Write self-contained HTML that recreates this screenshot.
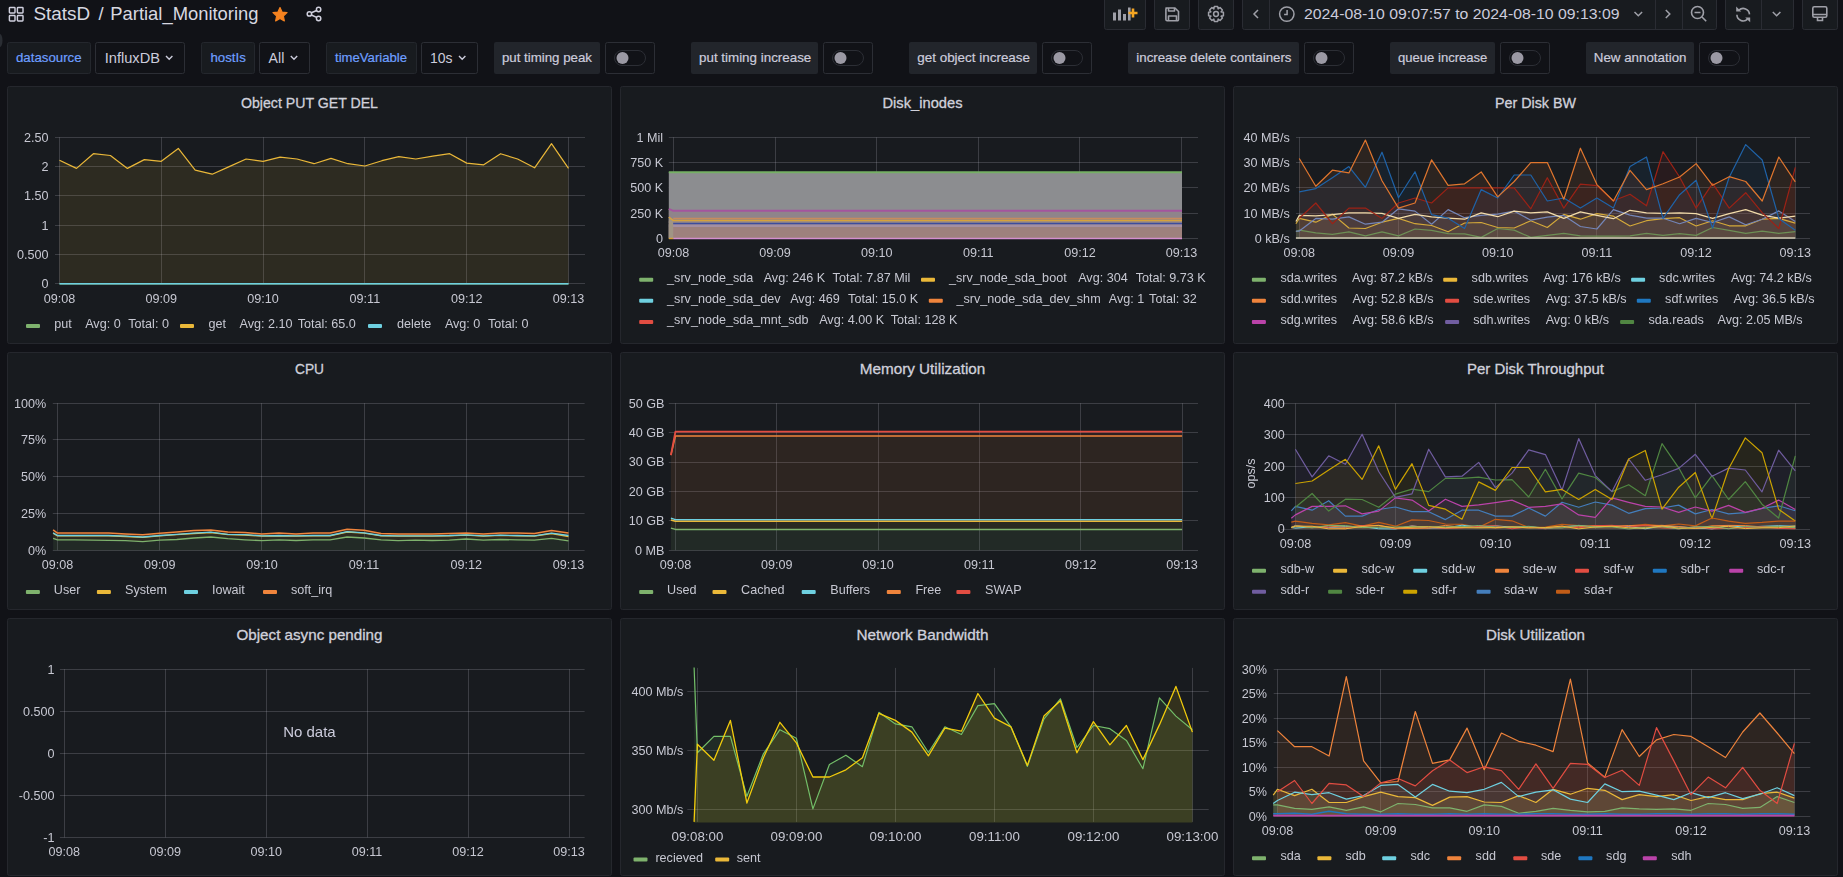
<!DOCTYPE html>
<html><head><meta charset="utf-8"><style>
html,body{margin:0;padding:0;background:#111217;width:1843px;height:877px;overflow:hidden}
svg{display:block;font-family:"Liberation Sans",sans-serif;position:absolute;left:0;top:0}
#l2{will-change:transform}
</style></head><body>
<svg width="1843" height="877" viewBox="0 0 1843 877">
<rect x="9.4" y="7.4" width="5.6" height="5.6" fill="none" stroke="#d0d0de" stroke-width="1.45" rx="0.7"/>
<rect x="17.4" y="7.4" width="5.6" height="5.6" fill="none" stroke="#d0d0de" stroke-width="1.45" rx="0.7"/>
<rect x="9.4" y="15.4" width="5.6" height="5.6" fill="none" stroke="#d0d0de" stroke-width="1.45" rx="0.7"/>
<rect x="17.4" y="15.4" width="5.6" height="5.6" fill="none" stroke="#d0d0de" stroke-width="1.45" rx="0.7"/>
<text x="33.5" y="20.0" font-size="18.9" fill="#d8d9e1">StatsD</text>
<text x="98.5" y="20.0" font-size="18.4" fill="#d8d9e1">/</text>
<text x="110.3" y="20.0" font-size="18.4" fill="#d8d9e1">Partial_Monitoring</text>
<polygon points="280.00,7.50 282.06,12.07 287.04,12.61 283.33,15.98 284.35,20.89 280.00,18.40 275.65,20.89 276.67,15.98 272.96,12.61 277.94,12.07" fill="#F5821F" stroke="#F5821F" stroke-width="1.2" stroke-linejoin="round"/>
<g fill="none" stroke="#d0d0de" stroke-width="1.5"><circle cx="318.6" cy="9.5" r="2.2"/><circle cx="318.6" cy="18.5" r="2.2"/><circle cx="309.4" cy="13.9" r="2.2"/><path d="M311.4 12.8 L316.6 10.5 M311.4 15 L316.6 17.4"/></g>
<rect x="1104.5" y="-2.5" width="41" height="32" fill="#181b1f" stroke="#2a2c33" stroke-width="1" rx="2"/>
<rect x="1154.5" y="-2.5" width="35" height="32" fill="#181b1f" stroke="#2a2c33" stroke-width="1" rx="2"/>
<rect x="1198.5" y="-2.5" width="35" height="32" fill="#181b1f" stroke="#2a2c33" stroke-width="1" rx="2"/>
<rect x="1242.5" y="-2.5" width="474" height="32" fill="#181b1f" stroke="#2a2c33" stroke-width="1" rx="2"/>
<rect x="1725.5" y="-2.5" width="68" height="32" fill="#181b1f" stroke="#2a2c33" stroke-width="1" rx="2"/>
<rect x="1802.5" y="-2.5" width="35" height="32" fill="#181b1f" stroke="#2a2c33" stroke-width="1" rx="2"/>
<line x1="1269.5" y1="-3" x2="1269.5" y2="29" stroke="#2a2c33"/>
<line x1="1655.5" y1="-3" x2="1655.5" y2="29" stroke="#2a2c33"/>
<line x1="1682.5" y1="-3" x2="1682.5" y2="29" stroke="#2a2c33"/>
<line x1="1761.5" y1="-3" x2="1761.5" y2="29" stroke="#2a2c33"/>
<g fill="#9fa0a8"><rect x="1113" y="12.5" width="3" height="8"/><rect x="1118" y="9.5" width="3" height="11"/><rect x="1123" y="14" width="3" height="6.5"/><rect x="1128" y="7.5" width="2.6" height="13"/></g>
<path d="M1133 8.5 v9 M1128.5 13 h9" stroke="#F5A623" stroke-width="2.6"/>
<g fill="none" stroke="#9fa0a8" stroke-width="1.6" stroke-linejoin="round"><path d="M1166 8 h9 l3.5 3.5 v8 a1.2 1.2 0 0 1 -1.2 1.2 h-10.2 a1.2 1.2 0 0 1 -1.2 -1.2 v-10.3 a1.2 1.2 0 0 1 1.1 -1.2z"/><path d="M1168.5 8 v3 h6 v-3"/><path d="M1168.5 20.5 v-4.5 h8 v4.5"/></g>
<polygon points="1223.42,12.34 1223.42,15.66 1221.11,16.28 1221.23,16.00 1222.42,18.07 1220.07,20.42 1218.00,19.23 1218.28,19.11 1217.66,21.42 1214.34,21.42 1213.72,19.11 1214.00,19.23 1211.93,20.42 1209.58,18.07 1210.77,16.00 1210.89,16.28 1208.58,15.66 1208.58,12.34 1210.89,11.72 1210.77,12.00 1209.58,9.93 1211.93,7.58 1214.00,8.77 1213.72,8.89 1214.34,6.58 1217.66,6.58 1218.28,8.89 1218.00,8.77 1220.07,7.58 1222.42,9.93 1221.23,12.00 1221.11,11.72" fill="none" stroke="#9fa0a8" stroke-width="1.5" stroke-linejoin="round"/><circle cx="1216" cy="14" r="2.4" fill="none" stroke="#9fa0a8" stroke-width="1.5"/>
<path d="M1258 10 L1254 14 L1258 18" fill="none" stroke="#9fa0a8" stroke-width="1.5"/>
<path d="M1665.8 10 L1669.8 14 L1665.8 18" fill="none" stroke="#9fa0a8" stroke-width="1.5"/>
<path d="M1634.5 12 L1638.3 15.8 L1642.1 12" fill="none" stroke="#9fa0a8" stroke-width="1.5"/>
<path d="M1772.8 12 L1776.6 15.8 L1780.4 12" fill="none" stroke="#9fa0a8" stroke-width="1.5"/>
<g fill="none" stroke="#9fa0a8" stroke-width="1.5"><circle cx="1286.8" cy="14.1" r="7.2"/><path d="M1287.1 10 v4.4 h-3"/></g>
<text x="1304.0" y="19.3" font-size="15" fill="#ccccdc" textLength="315.5" lengthAdjust="spacingAndGlyphs">2024-08-10 09:07:57 to 2024-08-10 09:13:09</text>
<g fill="none" stroke="#9fa0a8" stroke-width="1.6"><circle cx="1697.5" cy="12.5" r="6"/><path d="M1694.5 12.5 h6 M1702 17 l4.2 4.2"/></g>
<g fill="none" stroke="#9fa0a8" stroke-width="1.6"><path d="M1738.9 10.2 A6.3 6.3 0 0 1 1749.5 14.4"/><path d="M1736.9 14.8 A6.3 6.3 0 0 0 1747.6 19.1"/></g>
<g fill="#9fa0a8"><path d="M1736.2 6.6 L1736.2 11.6 L1741.2 11.6 Z"/><path d="M1745.2 17.4 L1750.2 17.4 L1750.2 22.2 Z"/></g>
<g fill="none" stroke="#9fa0a8" stroke-width="1.6"><rect x="1812.8" y="6.8" width="14" height="10.5" rx="1.5"/><path d="M1813 14.5 h14 M1817.5 17.5 v3 h5 v-3"/></g>
<path d="M0 34 a2.5 6.5 0 0 1 0 13z" fill="#2a2d33"/>
<rect x="7.5" y="42.5" width="83" height="31" fill="#181b1f" stroke="#24272d" stroke-width="1" rx="2"/>
<text x="16.0" y="62.0" font-size="13.3" fill="#6E9FFF" textLength="65.6" lengthAdjust="spacingAndGlyphs" stroke="#6E9FFF" stroke-width="0.2">datasource</text>
<rect x="95.5" y="42.5" width="89" height="31" fill="#111217" stroke="#2c2e35" stroke-width="1" rx="2"/>
<text x="104.7" y="63.0" font-size="15" fill="#ccccdc" textLength="55.3" lengthAdjust="spacingAndGlyphs">InfluxDB</text>
<path d="M166 56 L169.2 59.2 L172.4 56" fill="none" stroke="#ccccdc" stroke-width="1.4"/>
<rect x="201.5" y="42.5" width="53" height="31" fill="#181b1f" stroke="#24272d" stroke-width="1" rx="2"/>
<text x="210.5" y="62.0" font-size="13.3" fill="#6E9FFF" textLength="35.3" lengthAdjust="spacingAndGlyphs" stroke="#6E9FFF" stroke-width="0.2">hostIs</text>
<rect x="259.5" y="42.5" width="50" height="31" fill="#111217" stroke="#2c2e35" stroke-width="1" rx="2"/>
<text x="268.6" y="63.0" font-size="15" fill="#ccccdc" textLength="15.7" lengthAdjust="spacingAndGlyphs">All</text>
<path d="M290.8 56 L294.0 59.2 L297.2 56" fill="none" stroke="#ccccdc" stroke-width="1.4"/>
<rect x="326.5" y="42.5" width="90" height="31" fill="#181b1f" stroke="#24272d" stroke-width="1" rx="2"/>
<text x="335.0" y="62.0" font-size="13.3" fill="#6E9FFF" textLength="72" lengthAdjust="spacingAndGlyphs" stroke="#6E9FFF" stroke-width="0.2">timeVariable</text>
<rect x="421.5" y="42.5" width="56" height="31" fill="#111217" stroke="#2c2e35" stroke-width="1" rx="2"/>
<text x="430.0" y="63.0" font-size="15" fill="#ccccdc" textLength="22.5" lengthAdjust="spacingAndGlyphs">10s</text>
<path d="M459 56 L462.2 59.2 L465.4 56" fill="none" stroke="#ccccdc" stroke-width="1.4"/>
<rect x="494" y="42.0" width="106" height="32" fill="#22252b" rx="2"/>
<text x="501.9" y="62.0" font-size="13.3" fill="#ccccdc" textLength="90.1" lengthAdjust="spacingAndGlyphs" stroke="#ccccdc" stroke-width="0.2">put timing peak</text>
<rect x="605.5" y="42.5" width="49" height="31" fill="#111217" stroke="#2c2e35" stroke-width="1" rx="2"/>
<rect x="614.5" y="50.5" width="31" height="15" fill="#111217" stroke="#2c2e35" stroke-width="1" rx="7.5"/>
<circle cx="622.5" cy="58" r="6" fill="#9b99a4"/>
<rect x="691" y="42.0" width="127" height="32" fill="#22252b" rx="2"/>
<text x="699.0" y="62.0" font-size="13.3" fill="#ccccdc" textLength="112.3" lengthAdjust="spacingAndGlyphs" stroke="#ccccdc" stroke-width="0.2">put timing increase</text>
<rect x="823.5" y="42.5" width="49" height="31" fill="#111217" stroke="#2c2e35" stroke-width="1" rx="2"/>
<rect x="832.5" y="50.5" width="31" height="15" fill="#111217" stroke="#2c2e35" stroke-width="1" rx="7.5"/>
<circle cx="840.5" cy="58" r="6" fill="#9b99a4"/>
<rect x="909" y="42.0" width="128" height="32" fill="#22252b" rx="2"/>
<text x="917.3" y="62.0" font-size="13.3" fill="#ccccdc" textLength="112.7" lengthAdjust="spacingAndGlyphs" stroke="#ccccdc" stroke-width="0.2">get object increase</text>
<rect x="1042.5" y="42.5" width="49" height="31" fill="#111217" stroke="#2c2e35" stroke-width="1" rx="2"/>
<rect x="1051.5" y="50.5" width="31" height="15" fill="#111217" stroke="#2c2e35" stroke-width="1" rx="7.5"/>
<circle cx="1059.5" cy="58" r="6" fill="#9b99a4"/>
<rect x="1128" y="42.0" width="171" height="32" fill="#22252b" rx="2"/>
<text x="1136.3" y="62.0" font-size="13.3" fill="#ccccdc" textLength="155.2" lengthAdjust="spacingAndGlyphs" stroke="#ccccdc" stroke-width="0.2">increase delete containers</text>
<rect x="1304.5" y="42.5" width="49" height="31" fill="#111217" stroke="#2c2e35" stroke-width="1" rx="2"/>
<rect x="1313.5" y="50.5" width="31" height="15" fill="#111217" stroke="#2c2e35" stroke-width="1" rx="7.5"/>
<circle cx="1321.5" cy="58" r="6" fill="#9b99a4"/>
<rect x="1390" y="42.0" width="105" height="32" fill="#22252b" rx="2"/>
<text x="1398.0" y="62.0" font-size="13.3" fill="#ccccdc" textLength="89.4" lengthAdjust="spacingAndGlyphs" stroke="#ccccdc" stroke-width="0.2">queue increase</text>
<rect x="1500.5" y="42.5" width="49" height="31" fill="#111217" stroke="#2c2e35" stroke-width="1" rx="2"/>
<rect x="1509.5" y="50.5" width="31" height="15" fill="#111217" stroke="#2c2e35" stroke-width="1" rx="7.5"/>
<circle cx="1517.5" cy="58" r="6" fill="#9b99a4"/>
<rect x="1586" y="42.0" width="108" height="32" fill="#22252b" rx="2"/>
<text x="1593.8" y="62.0" font-size="13.3" fill="#ccccdc" textLength="92.7" lengthAdjust="spacingAndGlyphs" stroke="#ccccdc" stroke-width="0.2">New annotation</text>
<rect x="1699.5" y="42.5" width="49" height="31" fill="#111217" stroke="#2c2e35" stroke-width="1" rx="2"/>
<rect x="1708.5" y="50.5" width="31" height="15" fill="#111217" stroke="#2c2e35" stroke-width="1" rx="7.5"/>
<circle cx="1716.5" cy="58" r="6" fill="#9b99a4"/>
<rect x="7.5" y="86.5" width="604" height="257" fill="#181b1f" stroke="#25272d" stroke-width="1" rx="2"/>
<text x="309.5" y="108.0" font-size="14.6" fill="#d0d1db" text-anchor="middle" textLength="137" lengthAdjust="spacingAndGlyphs" stroke="#d0d1db" stroke-width="0.3">Object PUT GET DEL</text>
<rect x="620.5" y="86.5" width="604" height="257" fill="#181b1f" stroke="#25272d" stroke-width="1" rx="2"/>
<text x="922.5" y="108.0" font-size="14.6" fill="#d0d1db" text-anchor="middle" textLength="80" lengthAdjust="spacingAndGlyphs" stroke="#d0d1db" stroke-width="0.3">Disk_inodes</text>
<rect x="1233.5" y="86.5" width="604" height="257" fill="#181b1f" stroke="#25272d" stroke-width="1" rx="2"/>
<text x="1535.5" y="108.0" font-size="14.6" fill="#d0d1db" text-anchor="middle" textLength="81" lengthAdjust="spacingAndGlyphs" stroke="#d0d1db" stroke-width="0.3">Per Disk BW</text>
<rect x="7.5" y="352.5" width="604" height="257" fill="#181b1f" stroke="#25272d" stroke-width="1" rx="2"/>
<text x="309.5" y="374.0" font-size="14.6" fill="#d0d1db" text-anchor="middle" textLength="29" lengthAdjust="spacingAndGlyphs" stroke="#d0d1db" stroke-width="0.3">CPU</text>
<rect x="620.5" y="352.5" width="604" height="257" fill="#181b1f" stroke="#25272d" stroke-width="1" rx="2"/>
<text x="922.5" y="374.0" font-size="14.6" fill="#d0d1db" text-anchor="middle" textLength="125.5" lengthAdjust="spacingAndGlyphs" stroke="#d0d1db" stroke-width="0.3">Memory Utilization</text>
<rect x="1233.5" y="352.5" width="604" height="257" fill="#181b1f" stroke="#25272d" stroke-width="1" rx="2"/>
<text x="1535.5" y="374.0" font-size="14.6" fill="#d0d1db" text-anchor="middle" textLength="137" lengthAdjust="spacingAndGlyphs" stroke="#d0d1db" stroke-width="0.3">Per Disk Throughput</text>
<rect x="7.5" y="618.5" width="604" height="257" fill="#181b1f" stroke="#25272d" stroke-width="1" rx="2"/>
<text x="309.5" y="640.0" font-size="14.6" fill="#d0d1db" text-anchor="middle" textLength="146" lengthAdjust="spacingAndGlyphs" stroke="#d0d1db" stroke-width="0.3">Object async pending</text>
<rect x="620.5" y="618.5" width="604" height="257" fill="#181b1f" stroke="#25272d" stroke-width="1" rx="2"/>
<text x="922.5" y="640.0" font-size="14.6" fill="#d0d1db" text-anchor="middle" textLength="132" lengthAdjust="spacingAndGlyphs" stroke="#d0d1db" stroke-width="0.3">Network Bandwidth</text>
<rect x="1233.5" y="618.5" width="604" height="257" fill="#181b1f" stroke="#25272d" stroke-width="1" rx="2"/>
<text x="1535.5" y="640.0" font-size="14.6" fill="#d0d1db" text-anchor="middle" textLength="99" lengthAdjust="spacingAndGlyphs" stroke="#d0d1db" stroke-width="0.3">Disk Utilization</text>
</svg>
<svg id="l2" width="1843" height="877" viewBox="0 0 1843 877">
<line x1="55" y1="137.5" x2="585" y2="137.5" stroke="rgba(204,204,220,0.2)" stroke-width="1"/>
<line x1="55" y1="166.5" x2="585" y2="166.5" stroke="rgba(204,204,220,0.2)" stroke-width="1"/>
<line x1="55" y1="195.5" x2="585" y2="195.5" stroke="rgba(204,204,220,0.2)" stroke-width="1"/>
<line x1="55" y1="225.5" x2="585" y2="225.5" stroke="rgba(204,204,220,0.2)" stroke-width="1"/>
<line x1="55" y1="254.5" x2="585" y2="254.5" stroke="rgba(204,204,220,0.2)" stroke-width="1"/>
<line x1="55" y1="283.5" x2="585" y2="283.5" stroke="rgba(204,204,220,0.2)" stroke-width="1"/>
<line x1="59.5" y1="137.3" x2="59.5" y2="283.8" stroke="rgba(204,204,220,0.2)" stroke-width="1"/>
<line x1="161.5" y1="137.3" x2="161.5" y2="283.8" stroke="rgba(204,204,220,0.2)" stroke-width="1"/>
<line x1="263.5" y1="137.3" x2="263.5" y2="283.8" stroke="rgba(204,204,220,0.2)" stroke-width="1"/>
<line x1="364.5" y1="137.3" x2="364.5" y2="283.8" stroke="rgba(204,204,220,0.2)" stroke-width="1"/>
<line x1="466.5" y1="137.3" x2="466.5" y2="283.8" stroke="rgba(204,204,220,0.2)" stroke-width="1"/>
<line x1="568.5" y1="137.3" x2="568.5" y2="283.8" stroke="rgba(204,204,220,0.2)" stroke-width="1"/>
<polygon points="59.5,283.8 59.5,160.2 76.5,168.4 93.4,153.7 110.4,155.5 127.4,168.4 144.3,159.6 161.3,161.3 178.3,148.4 195.2,170.1 212.2,174.2 229.2,166.6 246.1,159.0 263.1,161.3 280.1,157.2 297.0,159.0 314.0,163.7 331.0,158.4 347.9,163.7 364.9,166.0 381.9,160.7 398.8,156.6 415.8,159.0 432.8,156.1 449.7,153.7 466.7,163.1 483.7,164.8 500.6,153.7 517.6,159.0 534.6,167.8 551.5,143.7 568.5,168.4 568.5,283.8" fill="#EAB839" fill-opacity="0.1"/>
<polyline points="59.5,160.2 76.5,168.4 93.4,153.7 110.4,155.5 127.4,168.4 144.3,159.6 161.3,161.3 178.3,148.4 195.2,170.1 212.2,174.2 229.2,166.6 246.1,159.0 263.1,161.3 280.1,157.2 297.0,159.0 314.0,163.7 331.0,158.4 347.9,163.7 364.9,166.0 381.9,160.7 398.8,156.6 415.8,159.0 432.8,156.1 449.7,153.7 466.7,163.1 483.7,164.8 500.6,153.7 517.6,159.0 534.6,167.8 551.5,143.7 568.5,168.4" fill="none" stroke="#EAB839" stroke-width="1.2" stroke-linejoin="round"/>
<polyline points="59.5,283.8 76.5,283.8 93.4,283.8 110.4,283.8 127.4,283.8 144.3,283.8 161.3,283.8 178.3,283.8 195.2,283.8 212.2,283.8 229.2,283.8 246.1,283.8 263.1,283.8 280.1,283.8 297.0,283.8 314.0,283.8 331.0,283.8 347.9,283.8 364.9,283.8 381.9,283.8 398.8,283.8 415.8,283.8 432.8,283.8 449.7,283.8 466.7,283.8 483.7,283.8 500.6,283.8 517.6,283.8 534.6,283.8 551.5,283.8 568.5,283.8" fill="none" stroke="#7EB26D" stroke-width="1.2" stroke-linejoin="round"/>
<polyline points="59.5,283.8 76.5,283.8 93.4,283.8 110.4,283.8 127.4,283.8 144.3,283.8 161.3,283.8 178.3,283.8 195.2,283.8 212.2,283.8 229.2,283.8 246.1,283.8 263.1,283.8 280.1,283.8 297.0,283.8 314.0,283.8 331.0,283.8 347.9,283.8 364.9,283.8 381.9,283.8 398.8,283.8 415.8,283.8 432.8,283.8 449.7,283.8 466.7,283.8 483.7,283.8 500.6,283.8 517.6,283.8 534.6,283.8 551.5,283.8 568.5,283.8" fill="none" stroke="#6ED0E0" stroke-width="1.5" stroke-linejoin="round"/>
<text x="48.6" y="141.7" font-size="12.6" fill="#c7c8d2" text-anchor="end">2.50</text>
<text x="48.6" y="171.0" font-size="12.6" fill="#c7c8d2" text-anchor="end">2</text>
<text x="48.6" y="200.3" font-size="12.6" fill="#c7c8d2" text-anchor="end">1.50</text>
<text x="48.6" y="229.6" font-size="12.6" fill="#c7c8d2" text-anchor="end">1</text>
<text x="48.6" y="258.9" font-size="12.6" fill="#c7c8d2" text-anchor="end">0.500</text>
<text x="48.6" y="288.2" font-size="12.6" fill="#c7c8d2" text-anchor="end">0</text>
<text x="59.5" y="302.6" font-size="12.6" fill="#c7c8d2" text-anchor="middle">09:08</text>
<text x="161.3" y="302.6" font-size="12.6" fill="#c7c8d2" text-anchor="middle">09:09</text>
<text x="263.1" y="302.6" font-size="12.6" fill="#c7c8d2" text-anchor="middle">09:10</text>
<text x="364.9" y="302.6" font-size="12.6" fill="#c7c8d2" text-anchor="middle">09:11</text>
<text x="466.7" y="302.6" font-size="12.6" fill="#c7c8d2" text-anchor="middle">09:12</text>
<text x="568.5" y="302.6" font-size="12.6" fill="#c7c8d2" text-anchor="middle">09:13</text>
<rect x="26" y="324.0" width="14" height="4" fill="#7EB26D" rx="1"/>
<text x="54.3" y="328.0" font-size="12.6" fill="#c7c8d2">put</text>
<text x="85.2" y="328.0" font-size="12.6" fill="#c7c8d2">Avg: 0</text>
<text x="128.3" y="328.0" font-size="12.6" fill="#c7c8d2">Total: 0</text>
<rect x="180" y="324.0" width="14" height="4" fill="#EAB839" rx="1"/>
<text x="208.6" y="328.0" font-size="12.6" fill="#c7c8d2">get</text>
<text x="239.5" y="328.0" font-size="12.6" fill="#c7c8d2">Avg: 2.10</text>
<text x="297.7" y="328.0" font-size="12.6" fill="#c7c8d2">Total: 65.0</text>
<rect x="368" y="324.0" width="14" height="4" fill="#6ED0E0" rx="1"/>
<text x="396.9" y="328.0" font-size="12.6" fill="#c7c8d2">delete</text>
<text x="444.9" y="328.0" font-size="12.6" fill="#c7c8d2">Avg: 0</text>
<text x="488.0" y="328.0" font-size="12.6" fill="#c7c8d2">Total: 0</text>
<line x1="668.8" y1="137.5" x2="1198" y2="137.5" stroke="rgba(204,204,220,0.2)" stroke-width="1"/>
<line x1="668.8" y1="162.5" x2="1198" y2="162.5" stroke="rgba(204,204,220,0.2)" stroke-width="1"/>
<line x1="668.8" y1="187.5" x2="1198" y2="187.5" stroke="rgba(204,204,220,0.2)" stroke-width="1"/>
<line x1="668.8" y1="213.5" x2="1198" y2="213.5" stroke="rgba(204,204,220,0.2)" stroke-width="1"/>
<line x1="668.8" y1="238.5" x2="1198" y2="238.5" stroke="rgba(204,204,220,0.2)" stroke-width="1"/>
<line x1="673.5" y1="137.3" x2="673.5" y2="238.4" stroke="rgba(204,204,220,0.2)" stroke-width="1"/>
<line x1="775.5" y1="137.3" x2="775.5" y2="238.4" stroke="rgba(204,204,220,0.2)" stroke-width="1"/>
<line x1="876.5" y1="137.3" x2="876.5" y2="238.4" stroke="rgba(204,204,220,0.2)" stroke-width="1"/>
<line x1="978.5" y1="137.3" x2="978.5" y2="238.4" stroke="rgba(204,204,220,0.2)" stroke-width="1"/>
<line x1="1079.5" y1="137.3" x2="1079.5" y2="238.4" stroke="rgba(204,204,220,0.2)" stroke-width="1"/>
<line x1="1181.5" y1="137.3" x2="1181.5" y2="238.4" stroke="rgba(204,204,220,0.2)" stroke-width="1"/>
<rect x="668.8" y="172" width="513.2" height="66.4" fill="#8c8d90"/>
<polygon points="668.8,208.8 673.2,210.8 1182,210.8 1182,238.4 668.8,238.4" fill="#8f848b"/>
<rect x="668.8" y="221.2" width="513.2" height="1.8000000000000114" fill="#9a8b89"/>
<rect x="668.8" y="224.3" width="513.2" height="2.6999999999999886" fill="#a48fa3"/>
<rect x="668.8" y="227" width="513.2" height="11" fill="#9e817d"/>
<polygon points="668.8,217 673.2,220.4 673.2,238.4 668.8,238.4" fill="#a09585"/>
<line x1="668.8" y1="172.2" x2="1182" y2="172.2" stroke="#76b066" stroke-width="2"/>
<polyline points="668.8,208.8 673.2,210.8 1182,210.8" fill="none" stroke="#a4559e" stroke-width="2"/>
<line x1="673.2" y1="218.5" x2="1182" y2="218.5" stroke="#c88b5e" stroke-width="1.5"/>
<polyline points="668.8,217 673.2,220.4 1182,220.4" fill="none" stroke="#d6a23c" stroke-width="1.5"/>
<line x1="673.2" y1="223.6" x2="1182" y2="223.6" stroke="#3d4c9c" stroke-width="1.5"/>
<line x1="673.2" y1="238.5" x2="1182" y2="238.5" stroke="#d48fcf" stroke-width="1.5"/>
<line x1="668.8" y1="238.5" x2="673.2" y2="238.5" stroke="#d6a23c" stroke-width="1.5"/>
<text x="663.1" y="141.7" font-size="12.6" fill="#c7c8d2" text-anchor="end">1 Mil</text>
<text x="663.1" y="166.9" font-size="12.6" fill="#c7c8d2" text-anchor="end">750 K</text>
<text x="663.1" y="192.2" font-size="12.6" fill="#c7c8d2" text-anchor="end">500 K</text>
<text x="663.1" y="217.5" font-size="12.6" fill="#c7c8d2" text-anchor="end">250 K</text>
<text x="663.1" y="242.8" font-size="12.6" fill="#c7c8d2" text-anchor="end">0</text>
<text x="673.5" y="256.7" font-size="12.6" fill="#c7c8d2" text-anchor="middle">09:08</text>
<text x="775.1" y="256.7" font-size="12.6" fill="#c7c8d2" text-anchor="middle">09:09</text>
<text x="876.7" y="256.7" font-size="12.6" fill="#c7c8d2" text-anchor="middle">09:10</text>
<text x="978.3" y="256.7" font-size="12.6" fill="#c7c8d2" text-anchor="middle">09:11</text>
<text x="1079.9" y="256.7" font-size="12.6" fill="#c7c8d2" text-anchor="middle">09:12</text>
<text x="1181.5" y="256.7" font-size="12.6" fill="#c7c8d2" text-anchor="middle">09:13</text>
<rect x="639.2" y="277.7" width="14" height="4" fill="#7EB26D" rx="1"/>
<text x="667.1" y="281.7" font-size="12.6" fill="#c7c8d2">_srv_node_sda</text>
<text x="763.7" y="281.7" font-size="12.6" fill="#c7c8d2">Avg: 246 K</text>
<text x="832.6" y="281.7" font-size="12.6" fill="#c7c8d2">Total: 7.87 Mil</text>
<rect x="921" y="277.7" width="14" height="4" fill="#EAB839" rx="1"/>
<text x="949.0" y="281.7" font-size="12.6" fill="#c7c8d2">_srv_node_sda_boot</text>
<text x="1078.2" y="281.7" font-size="12.6" fill="#c7c8d2">Avg: 304</text>
<text x="1135.7" y="281.7" font-size="12.6" fill="#c7c8d2">Total: 9.73 K</text>
<rect x="639.2" y="298.8" width="14" height="4" fill="#6ED0E0" rx="1"/>
<text x="667.1" y="302.8" font-size="12.6" fill="#c7c8d2">_srv_node_sda_dev</text>
<text x="790.2" y="302.8" font-size="12.6" fill="#c7c8d2">Avg: 469</text>
<text x="848.1" y="302.8" font-size="12.6" fill="#c7c8d2">Total: 15.0 K</text>
<rect x="928.8" y="298.8" width="14" height="4" fill="#EF843C" rx="1"/>
<text x="956.4" y="302.8" font-size="12.6" fill="#c7c8d2">_srv_node_sda_dev_shm</text>
<text x="1108.8" y="302.8" font-size="12.6" fill="#c7c8d2">Avg: 1</text>
<text x="1149.1" y="302.8" font-size="12.6" fill="#c7c8d2">Total: 32</text>
<rect x="639.2" y="319.9" width="14" height="4" fill="#E24D42" rx="1"/>
<text x="667.1" y="323.9" font-size="12.6" fill="#c7c8d2">_srv_node_sda_mnt_sdb</text>
<text x="819.2" y="323.9" font-size="12.6" fill="#c7c8d2">Avg: 4.00 K</text>
<text x="890.8" y="323.9" font-size="12.6" fill="#c7c8d2">Total: 128 K</text>
<line x1="1296" y1="137.5" x2="1810" y2="137.5" stroke="rgba(204,204,220,0.2)" stroke-width="1"/>
<line x1="1296" y1="162.5" x2="1810" y2="162.5" stroke="rgba(204,204,220,0.2)" stroke-width="1"/>
<line x1="1296" y1="187.5" x2="1810" y2="187.5" stroke="rgba(204,204,220,0.2)" stroke-width="1"/>
<line x1="1296" y1="213.5" x2="1810" y2="213.5" stroke="rgba(204,204,220,0.2)" stroke-width="1"/>
<line x1="1296" y1="238.5" x2="1810" y2="238.5" stroke="rgba(204,204,220,0.2)" stroke-width="1"/>
<line x1="1299.5" y1="137.3" x2="1299.5" y2="238.4" stroke="rgba(204,204,220,0.2)" stroke-width="1"/>
<line x1="1398.5" y1="137.3" x2="1398.5" y2="238.4" stroke="rgba(204,204,220,0.2)" stroke-width="1"/>
<line x1="1497.5" y1="137.3" x2="1497.5" y2="238.4" stroke="rgba(204,204,220,0.2)" stroke-width="1"/>
<line x1="1596.5" y1="137.3" x2="1596.5" y2="238.4" stroke="rgba(204,204,220,0.2)" stroke-width="1"/>
<line x1="1696.5" y1="137.3" x2="1696.5" y2="238.4" stroke="rgba(204,204,220,0.2)" stroke-width="1"/>
<line x1="1795.5" y1="137.3" x2="1795.5" y2="238.4" stroke="rgba(204,204,220,0.2)" stroke-width="1"/>
<polygon points="1295.9,238.4 1295.9,231.8 1299.3,230.1 1315.8,232.8 1332.4,234.4 1348.9,231.8 1365.4,235.9 1382.0,231.8 1398.5,235.9 1415.0,229.0 1431.6,230.3 1448.1,233.6 1464.6,233.9 1481.2,237.4 1497.7,228.5 1514.2,230.1 1530.8,237.4 1547.3,235.4 1563.8,233.3 1580.4,235.9 1596.9,236.1 1613.4,236.1 1630.0,235.9 1646.5,233.3 1663.0,235.4 1679.6,233.6 1696.1,235.4 1712.6,227.5 1729.2,230.3 1745.7,233.3 1762.2,231.1 1778.8,233.3 1795.3,231.6 1795.3,238.4" fill="#6d8f55" fill-opacity="0.12"/>
<polygon points="1295.9,238.4 1295.9,223.7 1299.3,218.4 1315.8,222.2 1332.4,214.1 1348.9,228.0 1365.4,228.5 1382.0,222.2 1398.5,218.4 1415.0,223.7 1431.6,225.5 1448.1,231.8 1464.6,223.0 1481.2,222.5 1497.7,227.5 1514.2,228.0 1530.8,220.7 1547.3,227.5 1563.8,214.4 1580.4,219.2 1596.9,213.6 1613.4,216.2 1630.0,226.0 1646.5,220.7 1663.0,218.7 1679.6,217.7 1696.1,226.0 1712.6,220.7 1729.2,225.8 1745.7,225.8 1762.2,219.2 1778.8,218.4 1795.3,223.2 1795.3,238.4" fill="#d4a93a" fill-opacity="0.1"/>
<polygon points="1295.9,238.4 1295.9,231.1 1299.3,231.1 1315.8,218.4 1332.4,219.2 1348.9,216.9 1365.4,224.2 1382.0,222.2 1398.5,208.8 1415.0,211.1 1431.6,224.2 1448.1,209.6 1464.6,217.7 1481.2,215.4 1497.7,214.1 1514.2,211.1 1530.8,220.2 1547.3,217.2 1563.8,215.4 1580.4,226.5 1596.9,229.0 1613.4,209.6 1630.0,215.1 1646.5,218.2 1663.0,218.2 1679.6,223.7 1696.1,218.4 1712.6,222.5 1729.2,216.9 1745.7,224.8 1762.2,219.2 1778.8,210.9 1795.3,221.5 1795.3,238.4" fill="#7486b8" fill-opacity="0.1"/>
<polygon points="1295.9,238.4 1295.9,221.5 1299.3,215.4 1315.8,215.9 1332.4,214.6 1348.9,212.9 1365.4,212.9 1382.0,213.4 1398.5,218.4 1415.0,214.4 1431.6,216.9 1448.1,218.2 1464.6,219.2 1481.2,212.9 1497.7,216.7 1514.2,211.1 1530.8,212.9 1547.3,211.9 1563.8,218.4 1580.4,211.9 1596.9,215.4 1613.4,218.7 1630.0,210.3 1646.5,212.9 1663.0,213.4 1679.6,212.9 1696.1,213.6 1712.6,218.4 1729.2,213.6 1745.7,209.6 1762.2,215.1 1778.8,218.2 1795.3,216.2 1795.3,238.4" fill="#f3dcaa" fill-opacity="0.08"/>
<polygon points="1299.3,238.4 1299.3,218.2 1315.8,203.0 1332.4,223.7 1348.9,208.1 1365.4,208.1 1382.0,218.4 1398.5,203.0 1415.0,198.0 1431.6,203.0 1448.1,187.9 1464.6,187.9 1481.2,187.9 1497.7,187.9 1514.2,187.9 1530.8,208.8 1547.3,177.7 1563.8,208.1 1580.4,184.1 1596.9,185.6 1613.4,200.7 1630.0,194.2 1646.5,205.8 1663.0,151.7 1679.6,177.0 1696.1,208.1 1712.6,183.3 1729.2,208.1 1745.7,192.7 1762.2,212.6 1778.8,228.5 1795.3,167.4 1795.3,238.4" fill="#9c2216" fill-opacity="0.12"/>
<polygon points="1299.3,238.4 1299.3,191.9 1315.8,188.6 1332.4,177.7 1348.9,166.6 1365.4,187.3 1382.0,152.2 1398.5,197.7 1415.0,171.7 1431.6,214.6 1448.1,218.2 1464.6,228.5 1481.2,189.6 1497.7,198.0 1514.2,175.0 1530.8,175.0 1547.3,201.0 1563.8,198.0 1580.4,208.1 1596.9,198.0 1613.4,208.1 1630.0,166.6 1646.5,157.0 1663.0,218.4 1679.6,194.7 1696.1,180.3 1712.6,228.0 1729.2,177.2 1745.7,144.6 1762.2,160.0 1778.8,218.4 1795.3,230.3 1795.3,238.4" fill="#1f63a8" fill-opacity="0.1"/>
<polygon points="1299.3,238.4 1299.3,158.5 1315.8,186.3 1332.4,170.2 1348.9,172.9 1365.4,140.1 1382.0,180.8 1398.5,208.1 1415.0,203.0 1431.6,159.8 1448.1,185.3 1464.6,183.8 1481.2,171.9 1497.7,196.9 1514.2,181.5 1530.8,162.6 1547.3,162.6 1563.8,199.2 1580.4,148.2 1596.9,184.6 1613.4,201.0 1630.0,170.4 1646.5,189.6 1663.0,183.8 1679.6,177.0 1696.1,163.6 1712.6,185.3 1729.2,176.7 1745.7,181.5 1762.2,201.0 1778.8,157.0 1795.3,181.8 1795.3,238.4" fill="#E0762E" fill-opacity="0.1"/>
<polyline points="1295.9,231.8 1299.3,230.1 1315.8,232.8 1332.4,234.4 1348.9,231.8 1365.4,235.9 1382.0,231.8 1398.5,235.9 1415.0,229.0 1431.6,230.3 1448.1,233.6 1464.6,233.9 1481.2,237.4 1497.7,228.5 1514.2,230.1 1530.8,237.4 1547.3,235.4 1563.8,233.3 1580.4,235.9 1596.9,236.1 1613.4,236.1 1630.0,235.9 1646.5,233.3 1663.0,235.4 1679.6,233.6 1696.1,235.4 1712.6,227.5 1729.2,230.3 1745.7,233.3 1762.2,231.1 1778.8,233.3 1795.3,231.6" fill="none" stroke="#6d8f55" stroke-width="1.2" stroke-linejoin="round"/>
<polyline points="1295.9,223.7 1299.3,218.4 1315.8,222.2 1332.4,214.1 1348.9,228.0 1365.4,228.5 1382.0,222.2 1398.5,218.4 1415.0,223.7 1431.6,225.5 1448.1,231.8 1464.6,223.0 1481.2,222.5 1497.7,227.5 1514.2,228.0 1530.8,220.7 1547.3,227.5 1563.8,214.4 1580.4,219.2 1596.9,213.6 1613.4,216.2 1630.0,226.0 1646.5,220.7 1663.0,218.7 1679.6,217.7 1696.1,226.0 1712.6,220.7 1729.2,225.8 1745.7,225.8 1762.2,219.2 1778.8,218.4 1795.3,223.2" fill="none" stroke="#d4a93a" stroke-width="1.2" stroke-linejoin="round"/>
<polyline points="1295.9,231.1 1299.3,231.1 1315.8,218.4 1332.4,219.2 1348.9,216.9 1365.4,224.2 1382.0,222.2 1398.5,208.8 1415.0,211.1 1431.6,224.2 1448.1,209.6 1464.6,217.7 1481.2,215.4 1497.7,214.1 1514.2,211.1 1530.8,220.2 1547.3,217.2 1563.8,215.4 1580.4,226.5 1596.9,229.0 1613.4,209.6 1630.0,215.1 1646.5,218.2 1663.0,218.2 1679.6,223.7 1696.1,218.4 1712.6,222.5 1729.2,216.9 1745.7,224.8 1762.2,219.2 1778.8,210.9 1795.3,221.5" fill="none" stroke="#7486b8" stroke-width="1.2" stroke-linejoin="round"/>
<polyline points="1295.9,221.5 1299.3,215.4 1315.8,215.9 1332.4,214.6 1348.9,212.9 1365.4,212.9 1382.0,213.4 1398.5,218.4 1415.0,214.4 1431.6,216.9 1448.1,218.2 1464.6,219.2 1481.2,212.9 1497.7,216.7 1514.2,211.1 1530.8,212.9 1547.3,211.9 1563.8,218.4 1580.4,211.9 1596.9,215.4 1613.4,218.7 1630.0,210.3 1646.5,212.9 1663.0,213.4 1679.6,212.9 1696.1,213.6 1712.6,218.4 1729.2,213.6 1745.7,209.6 1762.2,215.1 1778.8,218.2 1795.3,216.2" fill="none" stroke="#f3dcaa" stroke-width="1.2" stroke-linejoin="round"/>
<polyline points="1299.3,218.2 1315.8,203.0 1332.4,223.7 1348.9,208.1 1365.4,208.1 1382.0,218.4 1398.5,203.0 1415.0,198.0 1431.6,203.0 1448.1,187.9 1464.6,187.9 1481.2,187.9 1497.7,187.9 1514.2,187.9 1530.8,208.8 1547.3,177.7 1563.8,208.1 1580.4,184.1 1596.9,185.6 1613.4,200.7 1630.0,194.2 1646.5,205.8 1663.0,151.7 1679.6,177.0 1696.1,208.1 1712.6,183.3 1729.2,208.1 1745.7,192.7 1762.2,212.6 1778.8,228.5 1795.3,167.4" fill="none" stroke="#9c2216" stroke-width="1.2" stroke-linejoin="round"/>
<polyline points="1299.3,191.9 1315.8,188.6 1332.4,177.7 1348.9,166.6 1365.4,187.3 1382.0,152.2 1398.5,197.7 1415.0,171.7 1431.6,214.6 1448.1,218.2 1464.6,228.5 1481.2,189.6 1497.7,198.0 1514.2,175.0 1530.8,175.0 1547.3,201.0 1563.8,198.0 1580.4,208.1 1596.9,198.0 1613.4,208.1 1630.0,166.6 1646.5,157.0 1663.0,218.4 1679.6,194.7 1696.1,180.3 1712.6,228.0 1729.2,177.2 1745.7,144.6 1762.2,160.0 1778.8,218.4 1795.3,230.3" fill="none" stroke="#1f63a8" stroke-width="1.2" stroke-linejoin="round"/>
<polyline points="1299.3,158.5 1315.8,186.3 1332.4,170.2 1348.9,172.9 1365.4,140.1 1382.0,180.8 1398.5,208.1 1415.0,203.0 1431.6,159.8 1448.1,185.3 1464.6,183.8 1481.2,171.9 1497.7,196.9 1514.2,181.5 1530.8,162.6 1547.3,162.6 1563.8,199.2 1580.4,148.2 1596.9,184.6 1613.4,201.0 1630.0,170.4 1646.5,189.6 1663.0,183.8 1679.6,177.0 1696.1,163.6 1712.6,185.3 1729.2,176.7 1745.7,181.5 1762.2,201.0 1778.8,157.0 1795.3,181.8" fill="none" stroke="#E0762E" stroke-width="1.2" stroke-linejoin="round"/>
<line x1="1295.9" y1="238" x2="1795.3" y2="238" stroke="#cfcbb5" stroke-width="1.5"/>
<text x="1289.7" y="141.7" font-size="12.6" fill="#c7c8d2" text-anchor="end">40 MB/s</text>
<text x="1289.7" y="166.9" font-size="12.6" fill="#c7c8d2" text-anchor="end">30 MB/s</text>
<text x="1289.7" y="192.2" font-size="12.6" fill="#c7c8d2" text-anchor="end">20 MB/s</text>
<text x="1289.7" y="217.5" font-size="12.6" fill="#c7c8d2" text-anchor="end">10 MB/s</text>
<text x="1289.7" y="242.8" font-size="12.6" fill="#c7c8d2" text-anchor="end">0 kB/s</text>
<text x="1299.3" y="256.7" font-size="12.6" fill="#c7c8d2" text-anchor="middle">09:08</text>
<text x="1398.5" y="256.7" font-size="12.6" fill="#c7c8d2" text-anchor="middle">09:09</text>
<text x="1497.7" y="256.7" font-size="12.6" fill="#c7c8d2" text-anchor="middle">09:10</text>
<text x="1596.9" y="256.7" font-size="12.6" fill="#c7c8d2" text-anchor="middle">09:11</text>
<text x="1696.1" y="256.7" font-size="12.6" fill="#c7c8d2" text-anchor="middle">09:12</text>
<text x="1795.3" y="256.7" font-size="12.6" fill="#c7c8d2" text-anchor="middle">09:13</text>
<rect x="1251.9" y="277.7" width="14" height="4" fill="#7EB26D" rx="1"/>
<text x="1280.4" y="281.7" font-size="12.6" fill="#c7c8d2">sda.writes</text>
<text x="1352.0" y="281.7" font-size="12.6" fill="#c7c8d2">Avg: 87.2 kB/s</text>
<rect x="1443.2" y="277.7" width="14" height="4" fill="#EAB839" rx="1"/>
<text x="1471.6" y="281.7" font-size="12.6" fill="#c7c8d2">sdb.writes</text>
<text x="1543.3" y="281.7" font-size="12.6" fill="#c7c8d2">Avg: 176 kB/s</text>
<rect x="1631.1" y="277.7" width="14" height="4" fill="#6ED0E0" rx="1"/>
<text x="1659.1" y="281.7" font-size="12.6" fill="#c7c8d2">sdc.writes</text>
<text x="1730.9" y="281.7" font-size="12.6" fill="#c7c8d2">Avg: 74.2 kB/s</text>
<rect x="1251.9" y="298.8" width="14" height="4" fill="#EF843C" rx="1"/>
<text x="1280.4" y="302.8" font-size="12.6" fill="#c7c8d2">sdd.writes</text>
<text x="1352.6" y="302.8" font-size="12.6" fill="#c7c8d2">Avg: 52.8 kB/s</text>
<rect x="1445.1" y="298.8" width="14" height="4" fill="#E24D42" rx="1"/>
<text x="1473.3" y="302.8" font-size="12.6" fill="#c7c8d2">sde.writes</text>
<text x="1545.7" y="302.8" font-size="12.6" fill="#c7c8d2">Avg: 37.5 kB/s</text>
<rect x="1636.8" y="298.8" width="14" height="4" fill="#1F78C1" rx="1"/>
<text x="1665.1" y="302.8" font-size="12.6" fill="#c7c8d2">sdf.writes</text>
<text x="1733.6" y="302.8" font-size="12.6" fill="#c7c8d2">Avg: 36.5 kB/s</text>
<rect x="1251.9" y="319.9" width="14" height="4" fill="#BA43A9" rx="1"/>
<text x="1280.4" y="323.9" font-size="12.6" fill="#c7c8d2">sdg.writes</text>
<text x="1352.6" y="323.9" font-size="12.6" fill="#c7c8d2">Avg: 58.6 kB/s</text>
<rect x="1445.1" y="319.9" width="14" height="4" fill="#705DA0" rx="1"/>
<text x="1473.3" y="323.9" font-size="12.6" fill="#c7c8d2">sdh.writes</text>
<text x="1545.7" y="323.9" font-size="12.6" fill="#c7c8d2">Avg: 0 kB/s</text>
<rect x="1620.1" y="319.9" width="14" height="4" fill="#508642" rx="1"/>
<text x="1648.5" y="323.9" font-size="12.6" fill="#c7c8d2">sda.reads</text>
<text x="1717.5" y="323.9" font-size="12.6" fill="#c7c8d2">Avg: 2.05 MB/s</text>
<line x1="52.8" y1="403.5" x2="584.6" y2="403.5" stroke="rgba(204,204,220,0.2)" stroke-width="1"/>
<line x1="52.8" y1="439.5" x2="584.6" y2="439.5" stroke="rgba(204,204,220,0.2)" stroke-width="1"/>
<line x1="52.8" y1="476.5" x2="584.6" y2="476.5" stroke="rgba(204,204,220,0.2)" stroke-width="1"/>
<line x1="52.8" y1="513.5" x2="584.6" y2="513.5" stroke="rgba(204,204,220,0.2)" stroke-width="1"/>
<line x1="52.8" y1="550.5" x2="584.6" y2="550.5" stroke="rgba(204,204,220,0.2)" stroke-width="1"/>
<line x1="57.5" y1="403.2" x2="57.5" y2="550.2" stroke="rgba(204,204,220,0.2)" stroke-width="1"/>
<line x1="159.5" y1="403.2" x2="159.5" y2="550.2" stroke="rgba(204,204,220,0.2)" stroke-width="1"/>
<line x1="261.5" y1="403.2" x2="261.5" y2="550.2" stroke="rgba(204,204,220,0.2)" stroke-width="1"/>
<line x1="364.5" y1="403.2" x2="364.5" y2="550.2" stroke="rgba(204,204,220,0.2)" stroke-width="1"/>
<line x1="466.5" y1="403.2" x2="466.5" y2="550.2" stroke="rgba(204,204,220,0.2)" stroke-width="1"/>
<line x1="568.5" y1="403.2" x2="568.5" y2="550.2" stroke="rgba(204,204,220,0.2)" stroke-width="1"/>
<polygon points="53.1,538.4 57.5,539.9 74.5,539.9 91.6,540.1 108.6,540.4 125.6,540.6 142.7,541.7 159.7,540.2 176.7,539.5 193.8,538.0 210.8,537.0 227.8,538.7 244.9,539.8 261.9,540.6 278.9,539.9 296.0,540.5 313.0,539.9 330.0,539.9 347.1,537.0 364.1,538.0 381.1,539.9 398.2,540.6 415.2,540.2 432.2,540.5 449.3,540.2 466.3,539.0 483.3,540.2 500.4,539.5 517.4,539.9 534.4,540.2 551.5,538.4 568.5,540.9 568.5,550.2 551.5,550.2 534.4,550.2 517.4,550.2 500.4,550.2 483.3,550.2 466.3,550.2 449.3,550.2 432.2,550.2 415.2,550.2 398.2,550.2 381.1,550.2 364.1,550.2 347.1,550.2 330.0,550.2 313.0,550.2 296.0,550.2 278.9,550.2 261.9,550.2 244.9,550.2 227.8,550.2 210.8,550.2 193.8,550.2 176.7,550.2 159.7,550.2 142.7,550.2 125.6,550.2 108.6,550.2 91.6,550.2 74.5,550.2 57.5,550.2 53.1,550.2" fill="#7EB26D" fill-opacity="0.1"/>
<polygon points="53.1,533.3 57.5,535.9 74.5,535.9 91.6,535.9 108.6,535.9 125.6,536.5 142.7,537.3 159.7,535.9 176.7,534.7 193.8,533.5 210.8,532.5 227.8,534.7 244.9,535.0 261.9,536.2 278.9,535.9 296.0,536.2 313.0,535.9 330.0,535.9 347.1,532.0 364.1,533.2 381.1,535.9 398.2,536.2 415.2,536.2 432.2,536.2 449.3,535.9 466.3,535.1 483.3,536.2 500.4,535.4 517.4,535.9 534.4,536.2 551.5,533.5 568.5,536.5 568.5,540.9 551.5,538.4 534.4,540.2 517.4,539.9 500.4,539.5 483.3,540.2 466.3,539.0 449.3,540.2 432.2,540.5 415.2,540.2 398.2,540.6 381.1,539.9 364.1,538.0 347.1,537.0 330.0,539.9 313.0,539.9 296.0,540.5 278.9,539.9 261.9,540.6 244.9,539.8 227.8,538.7 210.8,537.0 193.8,538.0 176.7,539.5 159.7,540.2 142.7,541.7 125.6,540.6 108.6,540.4 91.6,540.1 74.5,539.9 57.5,539.9 53.1,538.4" fill="#EAB839" fill-opacity="0.1"/>
<polygon points="53.1,532.9 57.5,535.5 74.5,535.5 91.6,535.5 108.6,535.5 125.6,536.1 142.7,537.0 159.7,535.5 176.7,534.3 193.8,533.1 210.8,532.1 227.8,534.3 244.9,534.6 261.9,535.8 278.9,535.5 296.0,535.8 313.0,535.5 330.0,535.5 347.1,531.7 364.1,532.9 381.1,535.5 398.2,535.8 415.2,535.8 432.2,535.8 449.3,535.5 466.3,534.8 483.3,535.8 500.4,535.1 517.4,535.5 534.4,535.8 551.5,533.1 568.5,535.5 568.5,536.5 551.5,533.5 534.4,536.2 517.4,535.9 500.4,535.4 483.3,536.2 466.3,535.1 449.3,535.9 432.2,536.2 415.2,536.2 398.2,536.2 381.1,535.9 364.1,533.2 347.1,532.0 330.0,535.9 313.0,535.9 296.0,536.2 278.9,535.9 261.9,536.2 244.9,535.0 227.8,534.7 210.8,532.5 193.8,533.5 176.7,534.7 159.7,535.9 142.7,537.3 125.6,536.5 108.6,535.9 91.6,535.9 74.5,535.9 57.5,535.9 53.1,533.3" fill="#6ED0E0" fill-opacity="0.1"/>
<polygon points="53.1,529.9 57.5,533.1 74.5,533.1 91.6,533.1 108.6,533.1 125.6,533.9 142.7,534.8 159.7,533.3 176.7,532.1 193.8,530.6 210.8,529.9 227.8,532.1 244.9,532.6 261.9,533.9 278.9,533.1 296.0,533.9 313.0,533.1 330.0,533.1 347.1,529.2 364.1,530.2 381.1,533.6 398.2,533.9 415.2,533.9 432.2,533.9 449.3,533.6 466.3,533.1 483.3,533.9 500.4,532.9 517.4,533.1 534.4,533.6 551.5,530.6 568.5,533.1 568.5,535.5 551.5,533.1 534.4,535.8 517.4,535.5 500.4,535.1 483.3,535.8 466.3,534.8 449.3,535.5 432.2,535.8 415.2,535.8 398.2,535.8 381.1,535.5 364.1,532.9 347.1,531.7 330.0,535.5 313.0,535.5 296.0,535.8 278.9,535.5 261.9,535.8 244.9,534.6 227.8,534.3 210.8,532.1 193.8,533.1 176.7,534.3 159.7,535.5 142.7,537.0 125.6,536.1 108.6,535.5 91.6,535.5 74.5,535.5 57.5,535.5 53.1,532.9" fill="#EF843C" fill-opacity="0.1"/>
<polyline points="53.1,538.4 57.5,539.9 74.5,539.9 91.6,540.1 108.6,540.4 125.6,540.6 142.7,541.7 159.7,540.2 176.7,539.5 193.8,538.0 210.8,537.0 227.8,538.7 244.9,539.8 261.9,540.6 278.9,539.9 296.0,540.5 313.0,539.9 330.0,539.9 347.1,537.0 364.1,538.0 381.1,539.9 398.2,540.6 415.2,540.2 432.2,540.5 449.3,540.2 466.3,539.0 483.3,540.2 500.4,539.5 517.4,539.9 534.4,540.2 551.5,538.4 568.5,540.9" fill="none" stroke="#7EB26D" stroke-width="1.3" stroke-linejoin="round"/>
<polyline points="53.1,529.9 57.5,533.1 74.5,533.1 91.6,533.1 108.6,533.1 125.6,533.9 142.7,534.8 159.7,533.3 176.7,532.1 193.8,530.6 210.8,529.9 227.8,532.1 244.9,532.6 261.9,533.9 278.9,533.1 296.0,533.9 313.0,533.1 330.0,533.1 347.1,529.2 364.1,530.2 381.1,533.6 398.2,533.9 415.2,533.9 432.2,533.9 449.3,533.6 466.3,533.1 483.3,533.9 500.4,532.9 517.4,533.1 534.4,533.6 551.5,530.6 568.5,533.1" fill="none" stroke="#EF843C" stroke-width="1.5" stroke-linejoin="round"/>
<polyline points="53.1,533.3 57.5,535.9 74.5,535.9 91.6,535.9 108.6,535.9 125.6,536.5 142.7,537.3 159.7,535.9 176.7,534.7 193.8,533.5 210.8,532.5 227.8,534.7 244.9,535.0 261.9,536.2 278.9,535.9 296.0,536.2 313.0,535.9 330.0,535.9 347.1,532.0 364.1,533.2 381.1,535.9 398.2,536.2 415.2,536.2 432.2,536.2 449.3,535.9 466.3,535.1 483.3,536.2 500.4,535.4 517.4,535.9 534.4,536.2 551.5,533.5 568.5,536.5" fill="none" stroke="#EAB839" stroke-width="1.3" stroke-linejoin="round"/>
<polyline points="53.1,532.9 57.5,535.5 74.5,535.5 91.6,535.5 108.6,535.5 125.6,536.1 142.7,537.0 159.7,535.5 176.7,534.3 193.8,533.1 210.8,532.1 227.8,534.3 244.9,534.6 261.9,535.8 278.9,535.5 296.0,535.8 313.0,535.5 330.0,535.5 347.1,531.7 364.1,532.9 381.1,535.5 398.2,535.8 415.2,535.8 432.2,535.8 449.3,535.5 466.3,534.8 483.3,535.8 500.4,535.1 517.4,535.5 534.4,535.8 551.5,533.1 568.5,535.5" fill="none" stroke="#6ED0E0" stroke-width="1.3" stroke-linejoin="round"/>
<text x="46.1" y="407.6" font-size="12.6" fill="#c7c8d2" text-anchor="end">100%</text>
<text x="46.1" y="444.3" font-size="12.6" fill="#c7c8d2" text-anchor="end">75%</text>
<text x="46.1" y="481.1" font-size="12.6" fill="#c7c8d2" text-anchor="end">50%</text>
<text x="46.1" y="517.9" font-size="12.6" fill="#c7c8d2" text-anchor="end">25%</text>
<text x="46.1" y="554.6" font-size="12.6" fill="#c7c8d2" text-anchor="end">0%</text>
<text x="57.5" y="568.7" font-size="12.6" fill="#c7c8d2" text-anchor="middle">09:08</text>
<text x="159.7" y="568.7" font-size="12.6" fill="#c7c8d2" text-anchor="middle">09:09</text>
<text x="261.9" y="568.7" font-size="12.6" fill="#c7c8d2" text-anchor="middle">09:10</text>
<text x="364.1" y="568.7" font-size="12.6" fill="#c7c8d2" text-anchor="middle">09:11</text>
<text x="466.3" y="568.7" font-size="12.6" fill="#c7c8d2" text-anchor="middle">09:12</text>
<text x="568.5" y="568.7" font-size="12.6" fill="#c7c8d2" text-anchor="middle">09:13</text>
<rect x="25.9" y="590.0" width="14" height="4" fill="#7EB26D" rx="1"/>
<text x="53.8" y="594.0" font-size="12.6" fill="#c7c8d2">User</text>
<rect x="96.9" y="590.0" width="14" height="4" fill="#EAB839" rx="1"/>
<text x="125.1" y="594.0" font-size="12.6" fill="#c7c8d2">System</text>
<rect x="184" y="590.0" width="14" height="4" fill="#6ED0E0" rx="1"/>
<text x="211.9" y="594.0" font-size="12.6" fill="#c7c8d2">Iowait</text>
<rect x="263" y="590.0" width="14" height="4" fill="#EF843C" rx="1"/>
<text x="291.0" y="594.0" font-size="12.6" fill="#c7c8d2">soft_irq</text>
<line x1="668.8" y1="403.5" x2="1198" y2="403.5" stroke="rgba(204,204,220,0.2)" stroke-width="1"/>
<line x1="668.8" y1="432.5" x2="1198" y2="432.5" stroke="rgba(204,204,220,0.2)" stroke-width="1"/>
<line x1="668.8" y1="462.5" x2="1198" y2="462.5" stroke="rgba(204,204,220,0.2)" stroke-width="1"/>
<line x1="668.8" y1="491.5" x2="1198" y2="491.5" stroke="rgba(204,204,220,0.2)" stroke-width="1"/>
<line x1="668.8" y1="520.5" x2="1198" y2="520.5" stroke="rgba(204,204,220,0.2)" stroke-width="1"/>
<line x1="668.8" y1="550.5" x2="1198" y2="550.5" stroke="rgba(204,204,220,0.2)" stroke-width="1"/>
<line x1="675.5" y1="403.2" x2="675.5" y2="550.2" stroke="rgba(204,204,220,0.2)" stroke-width="1"/>
<line x1="776.5" y1="403.2" x2="776.5" y2="550.2" stroke="rgba(204,204,220,0.2)" stroke-width="1"/>
<line x1="878.5" y1="403.2" x2="878.5" y2="550.2" stroke="rgba(204,204,220,0.2)" stroke-width="1"/>
<line x1="979.5" y1="403.2" x2="979.5" y2="550.2" stroke="rgba(204,204,220,0.2)" stroke-width="1"/>
<line x1="1080.5" y1="403.2" x2="1080.5" y2="550.2" stroke="rgba(204,204,220,0.2)" stroke-width="1"/>
<line x1="1182.5" y1="403.2" x2="1182.5" y2="550.2" stroke="rgba(204,204,220,0.2)" stroke-width="1"/>
<polygon points="670.9,528.1 675.4,529.4 1182.1,529.4 1182.1,550.2 675.4,550.2 670.9,550.2" fill="#7EB26D" fill-opacity="0.1"/>
<polygon points="670.9,520.0 675.4,521.3 1182.1,521.3 1182.1,529.4 675.4,529.4 670.9,528.1" fill="#EAB839" fill-opacity="0.09"/>
<polygon points="670.9,518.1 675.4,519.6 1182.1,519.6 1182.1,521.3 675.4,521.3 670.9,520.0" fill="#6ED0E0" fill-opacity="0.1"/>
<polygon points="670.9,455.2 675.4,436.0 1182.1,436.0 1182.1,519.6 675.4,519.6 670.9,518.1" fill="#EF843C" fill-opacity="0.1"/>
<polygon points="670.9,455.2 675.4,431.7 1182.1,431.7 1182.1,436.0 675.4,436.0 670.9,455.2" fill="#E24D42" fill-opacity="0.1"/>
<polyline points="670.9,455.2 675.4,436.0 1182.1,436.0" fill="none" stroke="#EF843C" stroke-width="1.5" stroke-linejoin="round"/>
<polyline points="670.9,455.2 675.4,431.7 1182.1,431.7" fill="none" stroke="#E24D42" stroke-width="1.8" stroke-linejoin="round"/>
<polyline points="670.9,528.1 675.4,529.4 1182.1,529.4" fill="none" stroke="#7EB26D" stroke-width="1.5" stroke-linejoin="round"/>
<polyline points="670.9,520.0 675.4,521.3 1182.1,521.3" fill="none" stroke="#EAB839" stroke-width="1.5" stroke-linejoin="round"/>
<polyline points="670.9,518.1 675.4,519.6 1182.1,519.6" fill="none" stroke="#6ED0E0" stroke-width="1.3" stroke-linejoin="round"/>
<text x="664.4" y="407.6" font-size="12.6" fill="#c7c8d2" text-anchor="end">50 GB</text>
<text x="664.4" y="437.0" font-size="12.6" fill="#c7c8d2" text-anchor="end">40 GB</text>
<text x="664.4" y="466.4" font-size="12.6" fill="#c7c8d2" text-anchor="end">30 GB</text>
<text x="664.4" y="495.8" font-size="12.6" fill="#c7c8d2" text-anchor="end">20 GB</text>
<text x="664.4" y="525.2" font-size="12.6" fill="#c7c8d2" text-anchor="end">10 GB</text>
<text x="664.4" y="554.6" font-size="12.6" fill="#c7c8d2" text-anchor="end">0 MB</text>
<text x="675.5" y="568.7" font-size="12.6" fill="#c7c8d2" text-anchor="middle">09:08</text>
<text x="776.8" y="568.7" font-size="12.6" fill="#c7c8d2" text-anchor="middle">09:09</text>
<text x="878.1" y="568.7" font-size="12.6" fill="#c7c8d2" text-anchor="middle">09:10</text>
<text x="979.4" y="568.7" font-size="12.6" fill="#c7c8d2" text-anchor="middle">09:11</text>
<text x="1080.7" y="568.7" font-size="12.6" fill="#c7c8d2" text-anchor="middle">09:12</text>
<text x="1182.0" y="568.7" font-size="12.6" fill="#c7c8d2" text-anchor="middle">09:13</text>
<rect x="639.2" y="590.0" width="14" height="4" fill="#7EB26D" rx="1"/>
<text x="667.1" y="594.0" font-size="12.6" fill="#c7c8d2">Used</text>
<rect x="712.5" y="590.0" width="14" height="4" fill="#EAB839" rx="1"/>
<text x="741.1" y="594.0" font-size="12.6" fill="#c7c8d2">Cached</text>
<rect x="801.7" y="590.0" width="14" height="4" fill="#6ED0E0" rx="1"/>
<text x="830.3" y="594.0" font-size="12.6" fill="#c7c8d2">Buffers</text>
<rect x="886.8" y="590.0" width="14" height="4" fill="#EF843C" rx="1"/>
<text x="915.4" y="594.0" font-size="12.6" fill="#c7c8d2">Free</text>
<rect x="956.4" y="590.0" width="14" height="4" fill="#E24D42" rx="1"/>
<text x="985.0" y="594.0" font-size="12.6" fill="#c7c8d2">SWAP</text>
<line x1="1281.4" y1="403.5" x2="1810" y2="403.5" stroke="rgba(204,204,220,0.2)" stroke-width="1"/>
<line x1="1281.4" y1="434.5" x2="1810" y2="434.5" stroke="rgba(204,204,220,0.2)" stroke-width="1"/>
<line x1="1281.4" y1="466.5" x2="1810" y2="466.5" stroke="rgba(204,204,220,0.2)" stroke-width="1"/>
<line x1="1281.4" y1="497.5" x2="1810" y2="497.5" stroke="rgba(204,204,220,0.2)" stroke-width="1"/>
<line x1="1281.4" y1="529.5" x2="1810" y2="529.5" stroke="rgba(204,204,220,0.2)" stroke-width="1"/>
<line x1="1295.5" y1="403.4" x2="1295.5" y2="529.0" stroke="rgba(204,204,220,0.2)" stroke-width="1"/>
<line x1="1395.5" y1="403.4" x2="1395.5" y2="529.0" stroke="rgba(204,204,220,0.2)" stroke-width="1"/>
<line x1="1495.5" y1="403.4" x2="1495.5" y2="529.0" stroke="rgba(204,204,220,0.2)" stroke-width="1"/>
<line x1="1595.5" y1="403.4" x2="1595.5" y2="529.0" stroke="rgba(204,204,220,0.2)" stroke-width="1"/>
<line x1="1695.5" y1="403.4" x2="1695.5" y2="529.0" stroke="rgba(204,204,220,0.2)" stroke-width="1"/>
<line x1="1795.5" y1="403.4" x2="1795.5" y2="529.0" stroke="rgba(204,204,220,0.2)" stroke-width="1"/>
<polygon points="1291.3,529.0 1291.3,510.8 1295.4,506.4 1312.1,510.2 1328.7,500.7 1345.4,516.1 1362.1,516.1 1378.7,509.5 1395.4,507.0 1412.0,511.7 1428.7,511.7 1445.4,519.6 1462.0,510.2 1478.7,510.2 1495.4,516.1 1512.0,516.1 1528.7,508.0 1545.4,516.1 1562.0,502.3 1578.7,507.3 1595.3,502.0 1612.0,505.1 1628.7,513.3 1645.3,508.6 1662.0,508.0 1678.7,505.1 1695.3,513.9 1712.0,509.5 1728.6,513.9 1745.3,512.7 1762.0,508.3 1778.6,505.8 1795.3,510.8 1795.3,529.0" fill="#447EBC" fill-opacity="0.1"/>
<polygon points="1291.3,529.0 1291.3,518.3 1295.4,514.9 1312.1,506.4 1328.7,506.4 1345.4,505.8 1362.1,513.9 1378.7,511.1 1395.4,497.9 1412.0,500.1 1428.7,511.1 1445.4,499.2 1462.0,506.4 1478.7,504.8 1495.4,502.6 1512.0,500.1 1528.7,507.3 1545.4,506.4 1562.0,503.9 1578.7,514.9 1595.3,517.4 1612.0,497.9 1628.7,502.3 1645.3,506.4 1662.0,507.0 1678.7,512.4 1695.3,507.0 1712.0,511.1 1728.6,505.4 1745.3,512.4 1762.0,508.3 1778.6,500.1 1795.3,509.5 1795.3,529.0" fill="#BA43A9" fill-opacity="0.1"/>
<polygon points="1295.4,529.0 1295.4,507.3 1312.1,493.5 1328.7,511.1 1345.4,499.2 1362.1,499.5 1378.7,507.3 1395.4,494.1 1412.0,489.1 1428.7,491.6 1445.4,478.4 1462.0,478.4 1478.7,477.2 1495.4,480.0 1512.0,479.7 1528.7,497.0 1545.4,469.3 1562.0,498.9 1578.7,473.1 1595.3,477.5 1612.0,491.6 1628.7,484.7 1645.3,495.7 1662.0,443.6 1678.7,467.8 1695.3,497.9 1712.0,475.6 1728.6,499.5 1745.3,481.6 1762.0,504.2 1778.6,518.0 1795.3,455.8 1795.3,529.0" fill="#508642" fill-opacity="0.08"/>
<polygon points="1295.4,529.0 1295.4,449.2 1312.1,476.9 1328.7,455.8 1345.4,464.3 1362.1,434.2 1378.7,471.5 1395.4,497.3 1412.0,493.8 1428.7,449.2 1445.4,476.9 1462.0,476.2 1478.7,462.4 1495.4,487.6 1512.0,473.1 1528.7,449.9 1545.4,454.6 1562.0,490.1 1578.7,438.6 1595.3,475.6 1612.0,491.6 1628.7,459.0 1645.3,480.3 1662.0,474.7 1678.7,468.4 1695.3,454.3 1712.0,476.2 1728.6,468.1 1745.3,470.0 1762.0,491.9 1778.6,450.2 1795.3,470.9 1795.3,529.0" fill="#705DA0" fill-opacity="0.08"/>
<polygon points="1295.4,529.0 1295.4,483.5 1312.1,481.0 1328.7,470.0 1345.4,459.3 1362.1,479.4 1378.7,445.8 1395.4,489.4 1412.0,463.7 1428.7,505.4 1445.4,509.2 1462.0,519.3 1478.7,481.9 1495.4,490.4 1512.0,467.5 1528.7,467.5 1545.4,491.9 1562.0,489.4 1578.7,499.5 1595.3,489.4 1612.0,499.5 1628.7,459.0 1645.3,450.5 1662.0,509.2 1678.7,487.2 1695.3,472.5 1712.0,518.6 1728.6,468.7 1745.3,437.9 1762.0,452.7 1778.6,509.2 1795.3,521.1 1795.3,529.0" fill="#CCA300" fill-opacity="0.08"/>
<polygon points="1291.3,529.0 1291.3,522.1 1295.4,521.1 1312.1,523.3 1328.7,524.9 1345.4,522.7 1362.1,526.2 1378.7,522.4 1395.4,526.2 1412.0,519.9 1428.7,520.5 1445.4,524.0 1462.0,524.3 1478.7,527.4 1495.4,519.3 1512.0,520.8 1528.7,527.4 1545.4,527.1 1562.0,524.3 1578.7,525.5 1595.3,526.5 1612.0,526.5 1628.7,525.9 1645.3,524.3 1662.0,525.9 1678.7,524.0 1695.3,525.9 1712.0,518.0 1728.6,521.1 1745.3,523.3 1762.0,522.4 1778.6,521.1 1795.3,521.1 1795.3,529.0" fill="#C15C17" fill-opacity="0.1"/>
<polygon points="1291.3,529.0 1291.3,527.4 1295.4,528.1 1312.1,526.9 1328.7,527.6 1345.4,526.7 1362.1,526.6 1378.7,528.8 1395.4,529.0 1412.0,525.8 1428.7,528.0 1445.4,528.1 1462.0,525.2 1478.7,527.2 1495.4,525.8 1512.0,527.2 1528.7,526.6 1545.4,528.4 1562.0,526.6 1578.7,525.7 1595.3,527.0 1612.0,526.2 1628.7,526.5 1645.3,528.8 1662.0,526.1 1678.7,526.8 1695.3,527.9 1712.0,528.9 1728.6,525.7 1745.3,527.2 1762.0,526.3 1778.6,525.7 1795.3,526.3 1795.3,529.0" fill="#6ED0E0" fill-opacity="0.05"/>
<polygon points="1291.3,529.0 1291.3,527.4 1295.4,525.5 1312.1,527.5 1328.7,526.0 1345.4,527.3 1362.1,525.5 1378.7,525.7 1395.4,528.6 1412.0,528.5 1428.7,528.2 1445.4,525.4 1462.0,527.4 1478.7,526.6 1495.4,527.9 1512.0,527.1 1528.7,527.5 1545.4,527.7 1562.0,526.8 1578.7,526.8 1595.3,525.6 1612.0,526.4 1628.7,525.5 1645.3,525.8 1662.0,525.3 1678.7,526.5 1695.3,528.4 1712.0,525.8 1728.6,525.4 1745.3,525.6 1762.0,526.9 1778.6,526.3 1795.3,528.2 1795.3,529.0" fill="#EF843C" fill-opacity="0.05"/>
<polygon points="1291.3,529.0 1291.3,527.4 1295.4,525.9 1312.1,526.8 1328.7,527.9 1345.4,528.8 1362.1,525.8 1378.7,525.3 1395.4,528.7 1412.0,526.0 1428.7,527.5 1445.4,528.4 1462.0,527.9 1478.7,526.1 1495.4,525.7 1512.0,528.8 1528.7,526.7 1545.4,528.8 1562.0,526.3 1578.7,527.8 1595.3,525.7 1612.0,525.3 1628.7,527.1 1645.3,525.2 1662.0,527.8 1678.7,528.7 1695.3,526.7 1712.0,528.9 1728.6,528.3 1745.3,527.5 1762.0,526.7 1778.6,528.4 1795.3,528.8 1795.3,529.0" fill="#E24D42" fill-opacity="0.05"/>
<polygon points="1291.3,529.0 1291.3,527.4 1295.4,525.7 1312.1,527.8 1328.7,525.4 1345.4,525.6 1362.1,527.6 1378.7,527.3 1395.4,527.0 1412.0,526.6 1428.7,526.8 1445.4,526.9 1462.0,526.7 1478.7,525.5 1495.4,527.1 1512.0,527.4 1528.7,526.3 1545.4,528.1 1562.0,527.9 1578.7,525.3 1595.3,527.0 1612.0,526.9 1628.7,529.0 1645.3,527.4 1662.0,526.8 1678.7,528.9 1695.3,526.7 1712.0,526.6 1728.6,528.8 1745.3,526.6 1762.0,527.2 1778.6,526.4 1795.3,527.7 1795.3,529.0" fill="#7EB26D" fill-opacity="0.05"/>
<polygon points="1291.3,529.0 1291.3,527.4 1295.4,526.3 1312.1,526.2 1328.7,528.9 1345.4,528.8 1362.1,526.5 1378.7,525.4 1395.4,528.1 1412.0,527.3 1428.7,526.8 1445.4,527.8 1462.0,527.6 1478.7,527.8 1495.4,527.6 1512.0,526.8 1528.7,527.9 1545.4,527.6 1562.0,526.1 1578.7,528.9 1595.3,526.9 1612.0,526.2 1628.7,527.8 1645.3,528.2 1662.0,526.0 1678.7,528.1 1695.3,528.3 1712.0,527.4 1728.6,526.4 1745.3,528.6 1762.0,527.8 1778.6,527.7 1795.3,525.9 1795.3,529.0" fill="#EAB839" fill-opacity="0.05"/>
<polyline points="1291.3,510.8 1295.4,506.4 1312.1,510.2 1328.7,500.7 1345.4,516.1 1362.1,516.1 1378.7,509.5 1395.4,507.0 1412.0,511.7 1428.7,511.7 1445.4,519.6 1462.0,510.2 1478.7,510.2 1495.4,516.1 1512.0,516.1 1528.7,508.0 1545.4,516.1 1562.0,502.3 1578.7,507.3 1595.3,502.0 1612.0,505.1 1628.7,513.3 1645.3,508.6 1662.0,508.0 1678.7,505.1 1695.3,513.9 1712.0,509.5 1728.6,513.9 1745.3,512.7 1762.0,508.3 1778.6,505.8 1795.3,510.8" fill="none" stroke="#447EBC" stroke-width="1.2" stroke-linejoin="round"/>
<polyline points="1291.3,518.3 1295.4,514.9 1312.1,506.4 1328.7,506.4 1345.4,505.8 1362.1,513.9 1378.7,511.1 1395.4,497.9 1412.0,500.1 1428.7,511.1 1445.4,499.2 1462.0,506.4 1478.7,504.8 1495.4,502.6 1512.0,500.1 1528.7,507.3 1545.4,506.4 1562.0,503.9 1578.7,514.9 1595.3,517.4 1612.0,497.9 1628.7,502.3 1645.3,506.4 1662.0,507.0 1678.7,512.4 1695.3,507.0 1712.0,511.1 1728.6,505.4 1745.3,512.4 1762.0,508.3 1778.6,500.1 1795.3,509.5" fill="none" stroke="#BA43A9" stroke-width="1.2" stroke-linejoin="round"/>
<polyline points="1295.4,507.3 1312.1,493.5 1328.7,511.1 1345.4,499.2 1362.1,499.5 1378.7,507.3 1395.4,494.1 1412.0,489.1 1428.7,491.6 1445.4,478.4 1462.0,478.4 1478.7,477.2 1495.4,480.0 1512.0,479.7 1528.7,497.0 1545.4,469.3 1562.0,498.9 1578.7,473.1 1595.3,477.5 1612.0,491.6 1628.7,484.7 1645.3,495.7 1662.0,443.6 1678.7,467.8 1695.3,497.9 1712.0,475.6 1728.6,499.5 1745.3,481.6 1762.0,504.2 1778.6,518.0 1795.3,455.8" fill="none" stroke="#508642" stroke-width="1.2" stroke-linejoin="round"/>
<polyline points="1295.4,449.2 1312.1,476.9 1328.7,455.8 1345.4,464.3 1362.1,434.2 1378.7,471.5 1395.4,497.3 1412.0,493.8 1428.7,449.2 1445.4,476.9 1462.0,476.2 1478.7,462.4 1495.4,487.6 1512.0,473.1 1528.7,449.9 1545.4,454.6 1562.0,490.1 1578.7,438.6 1595.3,475.6 1612.0,491.6 1628.7,459.0 1645.3,480.3 1662.0,474.7 1678.7,468.4 1695.3,454.3 1712.0,476.2 1728.6,468.1 1745.3,470.0 1762.0,491.9 1778.6,450.2 1795.3,470.9" fill="none" stroke="#705DA0" stroke-width="1.2" stroke-linejoin="round"/>
<polyline points="1295.4,483.5 1312.1,481.0 1328.7,470.0 1345.4,459.3 1362.1,479.4 1378.7,445.8 1395.4,489.4 1412.0,463.7 1428.7,505.4 1445.4,509.2 1462.0,519.3 1478.7,481.9 1495.4,490.4 1512.0,467.5 1528.7,467.5 1545.4,491.9 1562.0,489.4 1578.7,499.5 1595.3,489.4 1612.0,499.5 1628.7,459.0 1645.3,450.5 1662.0,509.2 1678.7,487.2 1695.3,472.5 1712.0,518.6 1728.6,468.7 1745.3,437.9 1762.0,452.7 1778.6,509.2 1795.3,521.1" fill="none" stroke="#CCA300" stroke-width="1.2" stroke-linejoin="round"/>
<polyline points="1291.3,522.1 1295.4,521.1 1312.1,523.3 1328.7,524.9 1345.4,522.7 1362.1,526.2 1378.7,522.4 1395.4,526.2 1412.0,519.9 1428.7,520.5 1445.4,524.0 1462.0,524.3 1478.7,527.4 1495.4,519.3 1512.0,520.8 1528.7,527.4 1545.4,527.1 1562.0,524.3 1578.7,525.5 1595.3,526.5 1612.0,526.5 1628.7,525.9 1645.3,524.3 1662.0,525.9 1678.7,524.0 1695.3,525.9 1712.0,518.0 1728.6,521.1 1745.3,523.3 1762.0,522.4 1778.6,521.1 1795.3,521.1" fill="none" stroke="#C15C17" stroke-width="1.2" stroke-linejoin="round"/>
<polyline points="1291.3,527.4 1295.4,528.1 1312.1,526.9 1328.7,527.6 1345.4,526.7 1362.1,526.6 1378.7,528.8 1395.4,529.0 1412.0,525.8 1428.7,528.0 1445.4,528.1 1462.0,525.2 1478.7,527.2 1495.4,525.8 1512.0,527.2 1528.7,526.6 1545.4,528.4 1562.0,526.6 1578.7,525.7 1595.3,527.0 1612.0,526.2 1628.7,526.5 1645.3,528.8 1662.0,526.1 1678.7,526.8 1695.3,527.9 1712.0,528.9 1728.6,525.7 1745.3,527.2 1762.0,526.3 1778.6,525.7 1795.3,526.3" fill="none" stroke="#6ED0E0" stroke-width="1" stroke-linejoin="round"/>
<polyline points="1291.3,527.4 1295.4,525.5 1312.1,527.5 1328.7,526.0 1345.4,527.3 1362.1,525.5 1378.7,525.7 1395.4,528.6 1412.0,528.5 1428.7,528.2 1445.4,525.4 1462.0,527.4 1478.7,526.6 1495.4,527.9 1512.0,527.1 1528.7,527.5 1545.4,527.7 1562.0,526.8 1578.7,526.8 1595.3,525.6 1612.0,526.4 1628.7,525.5 1645.3,525.8 1662.0,525.3 1678.7,526.5 1695.3,528.4 1712.0,525.8 1728.6,525.4 1745.3,525.6 1762.0,526.9 1778.6,526.3 1795.3,528.2" fill="none" stroke="#EF843C" stroke-width="1" stroke-linejoin="round"/>
<polyline points="1291.3,527.4 1295.4,525.9 1312.1,526.8 1328.7,527.9 1345.4,528.8 1362.1,525.8 1378.7,525.3 1395.4,528.7 1412.0,526.0 1428.7,527.5 1445.4,528.4 1462.0,527.9 1478.7,526.1 1495.4,525.7 1512.0,528.8 1528.7,526.7 1545.4,528.8 1562.0,526.3 1578.7,527.8 1595.3,525.7 1612.0,525.3 1628.7,527.1 1645.3,525.2 1662.0,527.8 1678.7,528.7 1695.3,526.7 1712.0,528.9 1728.6,528.3 1745.3,527.5 1762.0,526.7 1778.6,528.4 1795.3,528.8" fill="none" stroke="#E24D42" stroke-width="1" stroke-linejoin="round"/>
<polyline points="1291.3,527.4 1295.4,525.7 1312.1,527.8 1328.7,525.4 1345.4,525.6 1362.1,527.6 1378.7,527.3 1395.4,527.0 1412.0,526.6 1428.7,526.8 1445.4,526.9 1462.0,526.7 1478.7,525.5 1495.4,527.1 1512.0,527.4 1528.7,526.3 1545.4,528.1 1562.0,527.9 1578.7,525.3 1595.3,527.0 1612.0,526.9 1628.7,529.0 1645.3,527.4 1662.0,526.8 1678.7,528.9 1695.3,526.7 1712.0,526.6 1728.6,528.8 1745.3,526.6 1762.0,527.2 1778.6,526.4 1795.3,527.7" fill="none" stroke="#7EB26D" stroke-width="1" stroke-linejoin="round"/>
<polyline points="1291.3,527.4 1295.4,526.3 1312.1,526.2 1328.7,528.9 1345.4,528.8 1362.1,526.5 1378.7,525.4 1395.4,528.1 1412.0,527.3 1428.7,526.8 1445.4,527.8 1462.0,527.6 1478.7,527.8 1495.4,527.6 1512.0,526.8 1528.7,527.9 1545.4,527.6 1562.0,526.1 1578.7,528.9 1595.3,526.9 1612.0,526.2 1628.7,527.8 1645.3,528.2 1662.0,526.0 1678.7,528.1 1695.3,528.3 1712.0,527.4 1728.6,526.4 1745.3,528.6 1762.0,527.8 1778.6,527.7 1795.3,525.9" fill="none" stroke="#EAB839" stroke-width="1" stroke-linejoin="round"/>
<text x="1284.7" y="407.8" font-size="12.6" fill="#c7c8d2" text-anchor="end">400</text>
<text x="1284.7" y="439.2" font-size="12.6" fill="#c7c8d2" text-anchor="end">300</text>
<text x="1284.7" y="470.6" font-size="12.6" fill="#c7c8d2" text-anchor="end">200</text>
<text x="1284.7" y="502.0" font-size="12.6" fill="#c7c8d2" text-anchor="end">100</text>
<text x="1284.7" y="533.4" font-size="12.6" fill="#c7c8d2" text-anchor="end">0</text>
<text x="1295.4" y="547.7" font-size="12.6" fill="#c7c8d2" text-anchor="middle">09:08</text>
<text x="1395.4" y="547.7" font-size="12.6" fill="#c7c8d2" text-anchor="middle">09:09</text>
<text x="1495.4" y="547.7" font-size="12.6" fill="#c7c8d2" text-anchor="middle">09:10</text>
<text x="1595.3" y="547.7" font-size="12.6" fill="#c7c8d2" text-anchor="middle">09:11</text>
<text x="1695.3" y="547.7" font-size="12.6" fill="#c7c8d2" text-anchor="middle">09:12</text>
<text x="1795.3" y="547.7" font-size="12.6" fill="#c7c8d2" text-anchor="middle">09:13</text>
<text transform="translate(1254.5,473.5) rotate(-90)" font-size="12.6" fill="#c7c8d2" text-anchor="middle">ops/s</text>
<rect x="1252" y="568.8" width="14" height="4" fill="#7EB26D" rx="1"/>
<text x="1280.4" y="572.8" font-size="12.6" fill="#c7c8d2">sdb-w</text>
<rect x="1333.1" y="568.8" width="14" height="4" fill="#EAB839" rx="1"/>
<text x="1361.5" y="572.8" font-size="12.6" fill="#c7c8d2">sdc-w</text>
<rect x="1413.2" y="568.8" width="14" height="4" fill="#6ED0E0" rx="1"/>
<text x="1441.6" y="572.8" font-size="12.6" fill="#c7c8d2">sdd-w</text>
<rect x="1495" y="568.8" width="14" height="4" fill="#EF843C" rx="1"/>
<text x="1522.7" y="572.8" font-size="12.6" fill="#c7c8d2">sde-w</text>
<rect x="1575" y="568.8" width="14" height="4" fill="#E24D42" rx="1"/>
<text x="1603.4" y="572.8" font-size="12.6" fill="#c7c8d2">sdf-w</text>
<rect x="1652.8" y="568.8" width="14" height="4" fill="#1F78C1" rx="1"/>
<text x="1680.8" y="572.8" font-size="12.6" fill="#c7c8d2">sdb-r</text>
<rect x="1729.2" y="568.8" width="14" height="4" fill="#BA43A9" rx="1"/>
<text x="1756.9" y="572.8" font-size="12.6" fill="#c7c8d2">sdc-r</text>
<rect x="1252" y="589.8" width="14" height="4" fill="#705DA0" rx="1"/>
<text x="1280.4" y="593.8" font-size="12.6" fill="#c7c8d2">sdd-r</text>
<rect x="1328.1" y="589.8" width="14" height="4" fill="#508642" rx="1"/>
<text x="1355.8" y="593.8" font-size="12.6" fill="#c7c8d2">sde-r</text>
<rect x="1403.2" y="589.8" width="14" height="4" fill="#CCA300" rx="1"/>
<text x="1431.6" y="593.8" font-size="12.6" fill="#c7c8d2">sdf-r</text>
<rect x="1476.6" y="589.8" width="14" height="4" fill="#447EBC" rx="1"/>
<text x="1504.0" y="593.8" font-size="12.6" fill="#c7c8d2">sda-w</text>
<rect x="1556" y="589.8" width="14" height="4" fill="#C15C17" rx="1"/>
<text x="1584.1" y="593.8" font-size="12.6" fill="#c7c8d2">sda-r</text>
<line x1="59.9" y1="669.5" x2="584.6" y2="669.5" stroke="rgba(204,204,220,0.2)" stroke-width="1"/>
<line x1="59.9" y1="711.5" x2="584.6" y2="711.5" stroke="rgba(204,204,220,0.2)" stroke-width="1"/>
<line x1="59.9" y1="753.5" x2="584.6" y2="753.5" stroke="rgba(204,204,220,0.2)" stroke-width="1"/>
<line x1="59.9" y1="795.5" x2="584.6" y2="795.5" stroke="rgba(204,204,220,0.2)" stroke-width="1"/>
<line x1="59.9" y1="837.5" x2="584.6" y2="837.5" stroke="rgba(204,204,220,0.2)" stroke-width="1"/>
<line x1="64.5" y1="669.2" x2="64.5" y2="837.4" stroke="rgba(204,204,220,0.2)" stroke-width="1"/>
<line x1="165.5" y1="669.2" x2="165.5" y2="837.4" stroke="rgba(204,204,220,0.2)" stroke-width="1"/>
<line x1="266.5" y1="669.2" x2="266.5" y2="837.4" stroke="rgba(204,204,220,0.2)" stroke-width="1"/>
<line x1="367.5" y1="669.2" x2="367.5" y2="837.4" stroke="rgba(204,204,220,0.2)" stroke-width="1"/>
<line x1="468.5" y1="669.2" x2="468.5" y2="837.4" stroke="rgba(204,204,220,0.2)" stroke-width="1"/>
<line x1="569.5" y1="669.2" x2="569.5" y2="837.4" stroke="rgba(204,204,220,0.2)" stroke-width="1"/>
<text x="54.5" y="673.6" font-size="12.6" fill="#c7c8d2" text-anchor="end">1</text>
<text x="54.5" y="715.6" font-size="12.6" fill="#c7c8d2" text-anchor="end">0.500</text>
<text x="54.5" y="757.7" font-size="12.6" fill="#c7c8d2" text-anchor="end">0</text>
<text x="54.5" y="799.8" font-size="12.6" fill="#c7c8d2" text-anchor="end">-0.500</text>
<text x="54.5" y="841.8" font-size="12.6" fill="#c7c8d2" text-anchor="end">-1</text>
<text x="64.2" y="855.5" font-size="12.6" fill="#c7c8d2" text-anchor="middle">09:08</text>
<text x="165.2" y="855.5" font-size="12.6" fill="#c7c8d2" text-anchor="middle">09:09</text>
<text x="266.2" y="855.5" font-size="12.6" fill="#c7c8d2" text-anchor="middle">09:10</text>
<text x="367.1" y="855.5" font-size="12.6" fill="#c7c8d2" text-anchor="middle">09:11</text>
<text x="468.1" y="855.5" font-size="12.6" fill="#c7c8d2" text-anchor="middle">09:12</text>
<text x="569.1" y="855.5" font-size="12.6" fill="#c7c8d2" text-anchor="middle">09:13</text>
<text x="309.4" y="736.5" font-size="15" fill="#ccccdc" text-anchor="middle">No data</text>
<line x1="687.3" y1="691.5" x2="1208.7" y2="691.5" stroke="rgba(204,204,220,0.2)" stroke-width="1"/>
<line x1="687.3" y1="750.5" x2="1208.7" y2="750.5" stroke="rgba(204,204,220,0.2)" stroke-width="1"/>
<line x1="687.3" y1="809.5" x2="1208.7" y2="809.5" stroke="rgba(204,204,220,0.2)" stroke-width="1"/>
<line x1="697.5" y1="667.9" x2="697.5" y2="821.9" stroke="rgba(204,204,220,0.2)" stroke-width="1"/>
<line x1="796.5" y1="667.9" x2="796.5" y2="821.9" stroke="rgba(204,204,220,0.2)" stroke-width="1"/>
<line x1="895.5" y1="667.9" x2="895.5" y2="821.9" stroke="rgba(204,204,220,0.2)" stroke-width="1"/>
<line x1="994.5" y1="667.9" x2="994.5" y2="821.9" stroke="rgba(204,204,220,0.2)" stroke-width="1"/>
<line x1="1093.5" y1="667.9" x2="1093.5" y2="821.9" stroke="rgba(204,204,220,0.2)" stroke-width="1"/>
<line x1="1192.5" y1="667.9" x2="1192.5" y2="821.9" stroke="rgba(204,204,220,0.2)" stroke-width="1"/>
<polygon points="694.1,822.4 694.1,667.6 697.4,752.8 713.9,736.4 730.4,736.4 746.9,796.3 763.4,753.8 779.9,729.7 796.4,738.3 812.9,808.9 829.4,764.5 845.9,755.2 862.4,766.7 878.9,712.3 895.4,723.9 911.9,726.8 928.4,752.5 944.9,726.8 961.4,734.5 977.9,705.6 994.4,703.7 1010.9,726.8 1027.4,766.4 1043.9,719.1 1060.4,698.8 1076.9,747.5 1093.4,725.5 1109.9,728.7 1126.4,740.4 1142.9,768.7 1159.4,697.9 1175.9,716.1 1192.4,729.7 1192.4,822.4" fill="#73BF69" fill-opacity="0.1"/>
<polygon points="694.1,822.4 694.1,821.9 697.4,744.2 713.9,760.2 730.4,720.4 746.9,803.0 763.4,757.7 779.9,722.3 796.4,742.9 812.9,777.0 829.4,777.0 845.9,769.8 862.4,757.7 878.9,713.3 895.4,720.4 911.9,732.1 928.4,755.8 944.9,728.1 961.4,731.2 977.9,693.5 994.4,718.2 1010.9,726.8 1027.4,765.4 1043.9,716.1 1060.4,700.7 1076.9,752.8 1093.4,721.6 1109.9,744.8 1126.4,725.5 1142.9,759.6 1159.4,724.9 1175.9,686.4 1192.4,732.1 1192.4,822.4" fill="#F2CC0C" fill-opacity="0.13"/>
<polyline points="694.1,667.6 697.4,752.8 713.9,736.4 730.4,736.4 746.9,796.3 763.4,753.8 779.9,729.7 796.4,738.3 812.9,808.9 829.4,764.5 845.9,755.2 862.4,766.7 878.9,712.3 895.4,723.9 911.9,726.8 928.4,752.5 944.9,726.8 961.4,734.5 977.9,705.6 994.4,703.7 1010.9,726.8 1027.4,766.4 1043.9,719.1 1060.4,698.8 1076.9,747.5 1093.4,725.5 1109.9,728.7 1126.4,740.4 1142.9,768.7 1159.4,697.9 1175.9,716.1 1192.4,729.7" fill="none" stroke="#73BF69" stroke-width="1.2" stroke-linejoin="round"/>
<polyline points="694.1,821.9 697.4,744.2 713.9,760.2 730.4,720.4 746.9,803.0 763.4,757.7 779.9,722.3 796.4,742.9 812.9,777.0 829.4,777.0 845.9,769.8 862.4,757.7 878.9,713.3 895.4,720.4 911.9,732.1 928.4,755.8 944.9,728.1 961.4,731.2 977.9,693.5 994.4,718.2 1010.9,726.8 1027.4,765.4 1043.9,716.1 1060.4,700.7 1076.9,752.8 1093.4,721.6 1109.9,744.8 1126.4,725.5 1142.9,759.6 1159.4,724.9 1175.9,686.4 1192.4,732.1" fill="none" stroke="#F2CC0C" stroke-width="1.3" stroke-linejoin="round"/>
<text x="683.3" y="695.5" font-size="12.6" fill="#c7c8d2" text-anchor="end">400 Mb/s</text>
<text x="683.3" y="754.9" font-size="12.6" fill="#c7c8d2" text-anchor="end">350 Mb/s</text>
<text x="683.3" y="814.2" font-size="12.6" fill="#c7c8d2" text-anchor="end">300 Mb/s</text>
<text x="697.4" y="841.4" font-size="13.3" fill="#c7c8d2" text-anchor="middle">09:08:00</text>
<text x="796.4" y="841.4" font-size="13.3" fill="#c7c8d2" text-anchor="middle">09:09:00</text>
<text x="895.4" y="841.4" font-size="13.3" fill="#c7c8d2" text-anchor="middle">09:10:00</text>
<text x="994.4" y="841.4" font-size="13.3" fill="#c7c8d2" text-anchor="middle">09:11:00</text>
<text x="1093.4" y="841.4" font-size="13.3" fill="#c7c8d2" text-anchor="middle">09:12:00</text>
<text x="1192.4" y="841.4" font-size="13.3" fill="#c7c8d2" text-anchor="middle">09:13:00</text>
<rect x="633.5" y="857.6" width="14" height="4" fill="#7EB26D" rx="1"/>
<text x="655.4" y="861.6" font-size="12.6" fill="#c7c8d2">recieved</text>
<rect x="715.2" y="857.6" width="14" height="4" fill="#EAB839" rx="1"/>
<text x="736.8" y="861.6" font-size="12.6" fill="#c7c8d2">sent</text>
<line x1="1273.7" y1="669.5" x2="1810.3" y2="669.5" stroke="rgba(204,204,220,0.2)" stroke-width="1"/>
<line x1="1273.7" y1="693.5" x2="1810.3" y2="693.5" stroke="rgba(204,204,220,0.2)" stroke-width="1"/>
<line x1="1273.7" y1="718.5" x2="1810.3" y2="718.5" stroke="rgba(204,204,220,0.2)" stroke-width="1"/>
<line x1="1273.7" y1="742.5" x2="1810.3" y2="742.5" stroke="rgba(204,204,220,0.2)" stroke-width="1"/>
<line x1="1273.7" y1="767.5" x2="1810.3" y2="767.5" stroke="rgba(204,204,220,0.2)" stroke-width="1"/>
<line x1="1273.7" y1="791.5" x2="1810.3" y2="791.5" stroke="rgba(204,204,220,0.2)" stroke-width="1"/>
<line x1="1273.7" y1="816.5" x2="1810.3" y2="816.5" stroke="rgba(204,204,220,0.2)" stroke-width="1"/>
<line x1="1277.5" y1="669.4" x2="1277.5" y2="816.2" stroke="rgba(204,204,220,0.2)" stroke-width="1"/>
<line x1="1380.5" y1="669.4" x2="1380.5" y2="816.2" stroke="rgba(204,204,220,0.2)" stroke-width="1"/>
<line x1="1484.5" y1="669.4" x2="1484.5" y2="816.2" stroke="rgba(204,204,220,0.2)" stroke-width="1"/>
<line x1="1587.5" y1="669.4" x2="1587.5" y2="816.2" stroke="rgba(204,204,220,0.2)" stroke-width="1"/>
<line x1="1691.5" y1="669.4" x2="1691.5" y2="816.2" stroke="rgba(204,204,220,0.2)" stroke-width="1"/>
<line x1="1794.5" y1="669.4" x2="1794.5" y2="816.2" stroke="rgba(204,204,220,0.2)" stroke-width="1"/>
<polygon points="1273.2,816.2 1273.2,804.9 1277.4,804.9 1294.6,808.4 1311.9,809.3 1329.1,806.9 1346.3,810.3 1363.6,806.9 1380.8,811.8 1398.0,803.5 1415.3,804.5 1432.5,807.9 1449.7,807.9 1467.0,811.3 1484.2,804.9 1501.4,806.4 1518.7,813.3 1535.9,811.3 1553.1,808.4 1570.4,810.3 1587.6,811.8 1604.8,811.3 1622.1,807.9 1639.3,808.9 1656.5,809.3 1673.8,808.9 1691.0,810.3 1708.2,803.5 1725.5,804.5 1742.7,808.4 1759.9,807.4 1777.2,796.6 1794.4,802.5 1794.4,816.2" fill="#7EB26D" fill-opacity="0.15"/>
<polygon points="1273.2,816.2 1273.2,795.2 1277.4,789.3 1294.6,795.6 1311.9,789.3 1329.1,802.5 1346.3,802.5 1363.6,796.6 1380.8,792.2 1398.0,796.6 1415.3,797.6 1432.5,805.4 1449.7,797.1 1467.0,796.6 1484.2,802.0 1501.4,802.5 1518.7,795.6 1535.9,802.5 1553.1,789.3 1570.4,794.2 1587.6,788.3 1604.8,790.3 1622.1,799.6 1639.3,794.7 1656.5,796.6 1673.8,794.7 1691.0,800.5 1708.2,796.6 1725.5,799.6 1742.7,799.6 1759.9,793.7 1777.2,792.2 1794.4,798.1 1794.4,816.2" fill="#EAB839" fill-opacity="0.15"/>
<polygon points="1273.2,816.2 1273.2,803.5 1277.4,800.5 1294.6,792.2 1311.9,794.7 1329.1,792.7 1346.3,799.1 1363.6,795.6 1380.8,785.4 1398.0,784.4 1415.3,797.1 1432.5,784.4 1449.7,791.2 1467.0,792.7 1484.2,789.3 1501.4,782.4 1518.7,796.6 1535.9,792.2 1553.1,789.8 1570.4,799.1 1587.6,802.5 1604.8,783.9 1622.1,791.7 1639.3,791.2 1656.5,795.2 1673.8,799.6 1691.0,792.7 1708.2,797.6 1725.5,792.7 1742.7,798.6 1759.9,794.2 1777.2,787.8 1794.4,795.6 1794.4,816.2" fill="#6ED0E0" fill-opacity="0.1"/>
<polygon points="1277.4,816.2 1277.4,730.6 1294.6,746.7 1311.9,746.7 1329.1,756.0 1346.3,676.7 1363.6,760.9 1380.8,782.9 1398.0,781.5 1415.3,711.5 1432.5,763.4 1449.7,759.9 1467.0,728.1 1484.2,769.7 1501.4,733.0 1518.7,741.3 1535.9,745.2 1553.1,751.6 1570.4,679.2 1587.6,762.9 1604.8,777.1 1622.1,729.6 1639.3,756.5 1656.5,739.9 1673.8,734.5 1691.0,736.4 1708.2,746.7 1725.5,757.5 1742.7,732.0 1759.9,713.0 1777.2,733.0 1794.4,753.6 1794.4,816.2" fill="#EF843C" fill-opacity="0.1"/>
<polygon points="1277.4,816.2 1277.4,791.7 1294.6,780.5 1311.9,803.5 1329.1,783.4 1346.3,784.9 1363.6,796.6 1380.8,782.9 1398.0,778.5 1415.3,785.9 1432.5,770.7 1449.7,759.9 1467.0,772.6 1484.2,766.8 1501.4,770.7 1518.7,789.3 1535.9,763.8 1553.1,788.3 1570.4,763.4 1587.6,764.3 1604.8,777.5 1622.1,770.2 1639.3,785.4 1656.5,727.6 1673.8,760.9 1691.0,794.7 1708.2,777.1 1725.5,787.8 1742.7,767.3 1759.9,790.3 1777.2,803.5 1794.4,743.3 1794.4,816.2" fill="#E24D42" fill-opacity="0.12"/>
<polyline points="1273.2,804.9 1277.4,804.9 1294.6,808.4 1311.9,809.3 1329.1,806.9 1346.3,810.3 1363.6,806.9 1380.8,811.8 1398.0,803.5 1415.3,804.5 1432.5,807.9 1449.7,807.9 1467.0,811.3 1484.2,804.9 1501.4,806.4 1518.7,813.3 1535.9,811.3 1553.1,808.4 1570.4,810.3 1587.6,811.8 1604.8,811.3 1622.1,807.9 1639.3,808.9 1656.5,809.3 1673.8,808.9 1691.0,810.3 1708.2,803.5 1725.5,804.5 1742.7,808.4 1759.9,807.4 1777.2,796.6 1794.4,802.5" fill="none" stroke="#7EB26D" stroke-width="1.2" stroke-linejoin="round"/>
<polyline points="1273.2,795.2 1277.4,789.3 1294.6,795.6 1311.9,789.3 1329.1,802.5 1346.3,802.5 1363.6,796.6 1380.8,792.2 1398.0,796.6 1415.3,797.6 1432.5,805.4 1449.7,797.1 1467.0,796.6 1484.2,802.0 1501.4,802.5 1518.7,795.6 1535.9,802.5 1553.1,789.3 1570.4,794.2 1587.6,788.3 1604.8,790.3 1622.1,799.6 1639.3,794.7 1656.5,796.6 1673.8,794.7 1691.0,800.5 1708.2,796.6 1725.5,799.6 1742.7,799.6 1759.9,793.7 1777.2,792.2 1794.4,798.1" fill="none" stroke="#EAB839" stroke-width="1.2" stroke-linejoin="round"/>
<polyline points="1273.2,803.5 1277.4,800.5 1294.6,792.2 1311.9,794.7 1329.1,792.7 1346.3,799.1 1363.6,795.6 1380.8,785.4 1398.0,784.4 1415.3,797.1 1432.5,784.4 1449.7,791.2 1467.0,792.7 1484.2,789.3 1501.4,782.4 1518.7,796.6 1535.9,792.2 1553.1,789.8 1570.4,799.1 1587.6,802.5 1604.8,783.9 1622.1,791.7 1639.3,791.2 1656.5,795.2 1673.8,799.6 1691.0,792.7 1708.2,797.6 1725.5,792.7 1742.7,798.6 1759.9,794.2 1777.2,787.8 1794.4,795.6" fill="none" stroke="#6ED0E0" stroke-width="1.2" stroke-linejoin="round"/>
<polyline points="1277.4,730.6 1294.6,746.7 1311.9,746.7 1329.1,756.0 1346.3,676.7 1363.6,760.9 1380.8,782.9 1398.0,781.5 1415.3,711.5 1432.5,763.4 1449.7,759.9 1467.0,728.1 1484.2,769.7 1501.4,733.0 1518.7,741.3 1535.9,745.2 1553.1,751.6 1570.4,679.2 1587.6,762.9 1604.8,777.1 1622.1,729.6 1639.3,756.5 1656.5,739.9 1673.8,734.5 1691.0,736.4 1708.2,746.7 1725.5,757.5 1742.7,732.0 1759.9,713.0 1777.2,733.0 1794.4,753.6" fill="none" stroke="#EF843C" stroke-width="1.2" stroke-linejoin="round"/>
<polyline points="1277.4,791.7 1294.6,780.5 1311.9,803.5 1329.1,783.4 1346.3,784.9 1363.6,796.6 1380.8,782.9 1398.0,778.5 1415.3,785.9 1432.5,770.7 1449.7,759.9 1467.0,772.6 1484.2,766.8 1501.4,770.7 1518.7,789.3 1535.9,763.8 1553.1,788.3 1570.4,763.4 1587.6,764.3 1604.8,777.5 1622.1,770.2 1639.3,785.4 1656.5,727.6 1673.8,760.9 1691.0,794.7 1708.2,777.1 1725.5,787.8 1742.7,767.3 1759.9,790.3 1777.2,803.5 1794.4,743.3" fill="none" stroke="#E24D42" stroke-width="1.2" stroke-linejoin="round"/>
<polyline points="1273.2,813.8 1277.4,813.8 1294.6,813.3 1311.9,814.2 1329.1,811.3 1346.3,813.8 1363.6,814.2 1380.8,814.2 1398.0,813.8 1415.3,814.2 1432.5,814.2 1449.7,813.8 1467.0,814.2 1484.2,813.8 1501.4,814.2 1518.7,814.2 1535.9,813.8 1553.1,813.8 1570.4,814.2 1587.6,814.2 1604.8,813.8 1622.1,814.2 1639.3,814.2 1656.5,813.8 1673.8,813.8 1691.0,814.2 1708.2,813.8 1725.5,813.8 1742.7,814.2 1759.9,813.8 1777.2,813.8 1794.4,814.2" fill="none" stroke="#1F78C1" stroke-width="1.6" stroke-linejoin="round"/>
<line x1="1273.2" y1="815.6" x2="1794.4" y2="815.6" stroke="#BA43A9" stroke-width="1.6"/>
<text x="1267.0" y="673.8" font-size="12.6" fill="#c7c8d2" text-anchor="end">30%</text>
<text x="1267.0" y="698.3" font-size="12.6" fill="#c7c8d2" text-anchor="end">25%</text>
<text x="1267.0" y="722.7" font-size="12.6" fill="#c7c8d2" text-anchor="end">20%</text>
<text x="1267.0" y="747.2" font-size="12.6" fill="#c7c8d2" text-anchor="end">15%</text>
<text x="1267.0" y="771.7" font-size="12.6" fill="#c7c8d2" text-anchor="end">10%</text>
<text x="1267.0" y="796.1" font-size="12.6" fill="#c7c8d2" text-anchor="end">5%</text>
<text x="1267.0" y="820.6" font-size="12.6" fill="#c7c8d2" text-anchor="end">0%</text>
<text x="1277.4" y="834.6" font-size="12.6" fill="#c7c8d2" text-anchor="middle">09:08</text>
<text x="1380.8" y="834.6" font-size="12.6" fill="#c7c8d2" text-anchor="middle">09:09</text>
<text x="1484.2" y="834.6" font-size="12.6" fill="#c7c8d2" text-anchor="middle">09:10</text>
<text x="1587.6" y="834.6" font-size="12.6" fill="#c7c8d2" text-anchor="middle">09:11</text>
<text x="1691.0" y="834.6" font-size="12.6" fill="#c7c8d2" text-anchor="middle">09:12</text>
<text x="1794.4" y="834.6" font-size="12.6" fill="#c7c8d2" text-anchor="middle">09:13</text>
<rect x="1252" y="856.3" width="14" height="4" fill="#7EB26D" rx="1"/>
<text x="1280.4" y="860.3" font-size="12.6" fill="#c7c8d2">sda</text>
<rect x="1317.4" y="856.3" width="14" height="4" fill="#EAB839" rx="1"/>
<text x="1345.5" y="860.3" font-size="12.6" fill="#c7c8d2">sdb</text>
<rect x="1382.2" y="856.3" width="14" height="4" fill="#6ED0E0" rx="1"/>
<text x="1410.5" y="860.3" font-size="12.6" fill="#c7c8d2">sdc</text>
<rect x="1447.2" y="856.3" width="14" height="4" fill="#EF843C" rx="1"/>
<text x="1475.6" y="860.3" font-size="12.6" fill="#c7c8d2">sdd</text>
<rect x="1513.3" y="856.3" width="14" height="4" fill="#E24D42" rx="1"/>
<text x="1541.0" y="860.3" font-size="12.6" fill="#c7c8d2">sde</text>
<rect x="1578.4" y="856.3" width="14" height="4" fill="#1F78C1" rx="1"/>
<text x="1606.1" y="860.3" font-size="12.6" fill="#c7c8d2">sdg</text>
<rect x="1642.8" y="856.3" width="14" height="4" fill="#BA43A9" rx="1"/>
<text x="1671.2" y="860.3" font-size="12.6" fill="#c7c8d2">sdh</text>
</svg></body></html>
